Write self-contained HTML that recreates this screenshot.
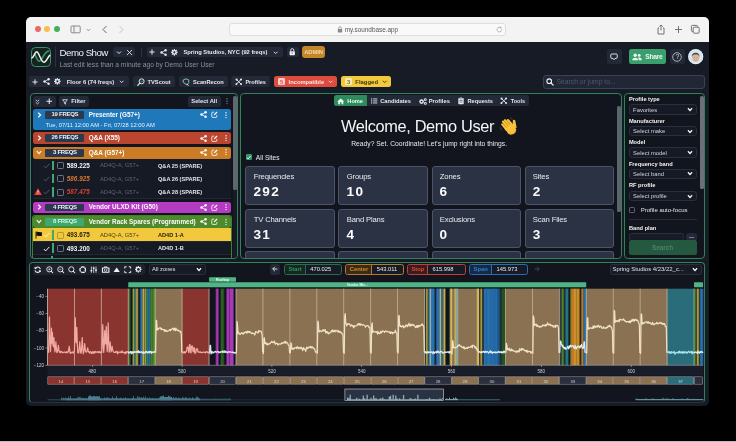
<!DOCTYPE html>
<html><head><meta charset="utf-8"><title>Soundbase</title>
<style>
html,body{margin:0;padding:0;background:#000;}
body{width:736px;height:442px;overflow:hidden;position:relative;font-family:"Liberation Sans", sans-serif;-webkit-font-smoothing:antialiased;}
svg{overflow:visible;display:block}
</style></head><body>
<div id="app" style="position:absolute;left:0;top:0;width:736px;height:442px;will-change:transform">
<div style="position:absolute;left:25.50px;top:17.00px;width:683.50px;height:389.30px;background:#161b26;border-radius:5px;overflow:hidden"></div>
<div style="position:absolute;left:25.50px;top:17.00px;width:683.50px;height:24.60px;background:#f3f3f3;border-radius:5px 5px 0 0"></div>
<div style="position:absolute;left:34.95px;top:26.45px;width:5.90px;height:5.90px;background:#ec6a5e;border-radius:50%"></div>
<div style="position:absolute;left:44.25px;top:26.45px;width:5.90px;height:5.90px;background:#f4bf4f;border-radius:50%"></div>
<div style="position:absolute;left:53.65px;top:26.45px;width:5.90px;height:5.90px;background:#42b354;border-radius:50%"></div>
<svg style="position:absolute;left:70px;top:25px" width="12" height="9" viewBox="0 0 12 9"><rect x="1" y="1" width="9.2" height="6.8" rx="0.9" fill="none" stroke="#7a7a7a" stroke-width="0.85"/><line x1="4" y1="1" x2="4" y2="7.8" stroke="#7a7a7a" stroke-width="0.85"/></svg>
<svg style="position:absolute;left:85.5px;top:27.5px" width="5" height="4" viewBox="0 0 5 4"><path d="M0.8 1 L2.5 2.8 L4.2 1" fill="none" stroke="#888" stroke-width="0.8"/></svg>
<svg style="position:absolute;left:101px;top:25px" width="8" height="9" viewBox="0 0 8 9"><path d="M5.5 1 L2 4.5 L5.5 8" fill="none" stroke="#666" stroke-width="1"/></svg>
<svg style="position:absolute;left:117px;top:25px" width="8" height="9" viewBox="0 0 8 9"><path d="M2.5 1 L6 4.5 L2.5 8" fill="none" stroke="#c4c4c4" stroke-width="1"/></svg>
<div style="position:absolute;left:229.00px;top:23.00px;width:276.50px;height:12.60px;background:#f9f9f9;border:0.6px solid #dedede;border-radius:3px;box-sizing:border-box"></div>
<svg style="position:absolute;left:336.5px;top:26px" width="6" height="7" viewBox="0 0 6 7"><rect x="0.8" y="3" width="4.4" height="3.4" rx="0.6" fill="#8a8a8a"/><path d="M1.7 3 V2 a1.3 1.3 0 0 1 2.6 0 V3" fill="none" stroke="#8a8a8a" stroke-width="0.7"/></svg>
<div style="position:absolute;left:344.80px;top:26.08px;line-height:7.63px;font-size:6.36px;color:#555;font-weight:400;white-space:nowrap;">my.soundbase.app</div>
<svg style="position:absolute;left:496px;top:26px" width="7" height="7" viewBox="0 0 7 7"><path d="M5.8 3.6 a2.4 2.4 0 1 1 -0.9 -1.9" fill="none" stroke="#999" stroke-width="0.7"/><path d="M4.3 0.7 L5.4 1.7 L4.2 2.4" fill="none" stroke="#999" stroke-width="0.7"/></svg>
<svg style="position:absolute;left:656px;top:23.5px" width="10" height="11" viewBox="0 0 10 11"><path d="M3 4 H2 V10 H8 V4 H7" fill="none" stroke="#666" stroke-width="0.9"/><path d="M5 6.5 V1 M3.3 2.6 L5 1 L6.7 2.6" fill="none" stroke="#666" stroke-width="0.9"/></svg>
<svg style="position:absolute;left:674px;top:25px" width="9" height="9" viewBox="0 0 9 9"><path d="M4.5 1 V8 M1 4.5 H8" fill="none" stroke="#666" stroke-width="0.9"/></svg>
<svg style="position:absolute;left:690px;top:24px" width="11" height="11" viewBox="0 0 11 11"><rect x="3.2" y="3.2" width="6" height="6" rx="1" fill="none" stroke="#666" stroke-width="0.9"/><path d="M7.5 3 V2.3 a0.9 0.9 0 0 0 -0.9 -0.9 H2.3 a0.9 0.9 0 0 0 -0.9 0.9 V6.6 a0.9 0.9 0 0 0 0.9 0.9 H3" fill="none" stroke="#666" stroke-width="0.9"/></svg>
<div style="position:absolute;left:31.30px;top:46.70px;width:19.80px;height:19.90px;background:#15241f;border:1.1px solid #3b9468;border-radius:4.5px;box-sizing:border-box"></div>
<svg style="position:absolute;left:31.3px;top:46.7px" width="19.8" height="19.8" viewBox="0 0 20 20"><path d="M4 7.6 C5.2 9.6 6.2 14.3 8.5 14.3 C11.3 14.3 13 4.6 17.8 4.2" fill="none" stroke="#379366" stroke-width="1.7" stroke-linecap="round"/><path d="M0.9 11 C2.9 10.4 3.8 4.9 5.8 4.9 S10.3 15.4 13 15.4 S16.8 10.2 18.9 8.4" fill="none" stroke="#f4f6f5" stroke-width="1.5" stroke-linecap="round"/></svg>
<div style="position:absolute;left:54.80px;top:46.50px;width:0.60px;height:20.00px;background:#2b3140"></div>
<div style="position:absolute;left:59.60px;top:46.57px;line-height:11.66px;font-size:9.72px;color:#eef0f4;font-weight:400;white-space:nowrap;letter-spacing:-0.518px;">Demo Show</div>
<div style="position:absolute;left:113.20px;top:47.00px;width:21.40px;height:10.20px;background:#232937;border-radius:2.5px"></div>
<svg style="position:absolute;left:115.6px;top:49.7px" width="6" height="5" viewBox="0 0 6 5"><path d="M1 1.5 L3 3.5 L5 1.5" fill="none" stroke="#e6e8ee" stroke-width="1"/></svg>
<svg style="position:absolute;left:126px;top:48.7px" width="7" height="7" viewBox="0 0 7 7"><path d="M1 1 L6 6 M6 1 L1 6" fill="none" stroke="#e6e8ee" stroke-width="0.85"/></svg>
<div style="position:absolute;left:140.80px;top:47.50px;width:0.60px;height:9.50px;background:#2b3140"></div>
<div style="position:absolute;left:147.00px;top:47.00px;width:135.80px;height:10.20px;background:#232937;border-radius:2.5px"></div>
<svg style="position:absolute;left:149.0px;top:49.1px" width="6" height="6" viewBox="0 0 6 6"><path d="M3 0.4 V5.6 M0.4 3 H5.6" fill="none" stroke="#e6e8ee" stroke-width="1"/></svg>
<svg style="position:absolute;left:159.9px;top:48.6px" width="7" height="7" viewBox="0 0 7 7"><path d="M5.5 1.3 L1.6 3.5 L5.5 5.7" fill="none" stroke="#e6e8ee" stroke-width="0.8"/><circle cx="5.6" cy="1.3" r="1.2" fill="#e6e8ee"/><circle cx="1.5" cy="3.5" r="1.2" fill="#e6e8ee"/><circle cx="5.6" cy="5.7" r="1.2" fill="#e6e8ee"/></svg>
<svg style="position:absolute;left:171.35px;top:48.75px" width="6.7" height="6.7" viewBox="0 0 7.4 7.4"><rect x="3.05" y="0" width="1.3" height="7.4" transform="rotate(0 3.7 3.7)" fill="#e6e8ee"/><rect x="3.05" y="0" width="1.3" height="7.4" transform="rotate(45 3.7 3.7)" fill="#e6e8ee"/><rect x="3.05" y="0" width="1.3" height="7.4" transform="rotate(90 3.7 3.7)" fill="#e6e8ee"/><rect x="3.05" y="0" width="1.3" height="7.4" transform="rotate(135 3.7 3.7)" fill="#e6e8ee"/><circle cx="3.7" cy="3.7" r="2.7" fill="#e6e8ee"/><circle cx="3.7" cy="3.7" r="1.15" fill="#232937"/></svg>
<div style="position:absolute;left:183.50px;top:49.13px;line-height:6.94px;font-size:5.78px;color:#e6e8ee;font-weight:700;white-space:nowrap;">Spring Studios, NYC (92 freqs)</div>
<svg style="position:absolute;left:272.8px;top:49.5px" width="5.4" height="5.4" viewBox="0 0 6 6"><path d="M1 2 L3 4 L5 2" fill="none" stroke="#eef0f4" stroke-width="1"/></svg>
<div style="position:absolute;left:286.50px;top:47.00px;width:12.10px;height:10.20px;background:#232937;border-radius:2.5px"></div>
<svg style="position:absolute;left:289.3px;top:48.3px" width="6.5" height="7.5" viewBox="0 0 6.5 7.5"><rect x="0.6" y="3.2" width="5.3" height="4" rx="0.6" fill="#f0f2f5"/><path d="M1.7 3.2 V2.2 a1.55 1.55 0 0 1 3.1 0 V3.2" fill="none" stroke="#f0f2f5" stroke-width="0.9"/><circle cx="3.25" cy="5" r="0.55" fill="#232937"/></svg>
<div style="position:absolute;left:302.00px;top:45.80px;width:23.20px;height:12.20px;background:#c5862a;border-radius:3px"></div>
<div style="position:absolute;left:313.50px;top:48.97px;line-height:6.86px;font-size:5.72px;color:#f3dcae;font-weight:700;white-space:nowrap;transform:translateX(-50%);">ADMIN</div>
<div style="position:absolute;left:59.50px;top:61.19px;line-height:8.03px;font-size:6.69px;color:#8a909d;font-weight:400;white-space:nowrap;">Last edit less than a minute ago by Demo User User</div>
<div style="position:absolute;left:607.00px;top:49.20px;width:14.50px;height:14.80px;background:#232937;border-radius:2.5px"></div>
<svg style="position:absolute;left:610.2px;top:53px" width="8" height="8" viewBox="0 0 8 8"><path d="M1.6 1 H6.4 a0.8 0.8 0 0 1 0.8 0.8 V4.6 a0.8 0.8 0 0 1 -0.8 0.8 H5 L4 6.8 L3 5.4 H1.6 a0.8 0.8 0 0 1 -0.8 -0.8 V1.8 a0.8 0.8 0 0 1 0.8 -0.8 Z" fill="none" stroke="#f0f2f5" stroke-width="0.9"/></svg>
<div style="position:absolute;left:629.00px;top:49.20px;width:37.20px;height:14.80px;background:#3a9f6c;border-radius:2.5px"></div>
<svg style="position:absolute;left:632px;top:53px" width="10" height="8" viewBox="0 0 10 8"><circle cx="3.2" cy="2.2" r="1.7" fill="#e9f7ef"/><path d="M0.3 7.3 a2.9 2.6 0 0 1 5.8 0 Z" fill="#e9f7ef"/><circle cx="7.2" cy="2.4" r="1.4" fill="#e9f7ef"/><path d="M6.4 4.6 a2.4 2.4 0 0 1 3.3 2.7 H6.9 a3.6 3.6 0 0 0 -1 -2.3 Z" fill="#e9f7ef"/></svg>
<div style="position:absolute;left:645.20px;top:53.02px;line-height:8.16px;font-size:6.8px;color:#e9f7ef;font-weight:700;white-space:nowrap;letter-spacing:-0.3px;">Share</div>
<div style="position:absolute;left:670.00px;top:49.20px;width:14.60px;height:14.80px;background:#232937;border-radius:2.5px"></div>
<svg style="position:absolute;left:672.3px;top:51.7px" width="10" height="10" viewBox="0 0 10 10"><circle cx="5" cy="5" r="4.3" fill="none" stroke="#d5d9e0" stroke-width="0.75"/></svg>
<div style="position:absolute;left:677.30px;top:52.92px;line-height:8.16px;font-size:6.8px;color:#d5d9e0;font-weight:400;white-space:nowrap;transform:translateX(-50%);">?</div>
<svg style="position:absolute;left:688.2px;top:49px" width="15.4" height="15.4" viewBox="0 0 15.4 15.4"><defs><clipPath id="av"><circle cx="7.7" cy="7.7" r="7.1"/></clipPath></defs><circle cx="7.7" cy="7.7" r="7.6" fill="#e8f2f8"/><circle cx="7.7" cy="7.7" r="6.9" fill="#d3e7f3"/><g clip-path="url(#av)"><path d="M4.9 12.6 Q7.7 11 10.5 12.6 V15.4 H4.9 Z" fill="#dfe8ee"/><ellipse cx="7.7" cy="8.6" rx="3.6" ry="4.3" fill="#dcb79c"/><path d="M3.9 8 C3.2 2.4 12.2 2.4 11.5 8 C11 5.9 10 5.4 7.7 5.4 S4.4 5.9 3.9 8 Z" fill="#5b4232"/><path d="M6.4 11 Q7.7 11.8 9 11" stroke="#b98a72" stroke-width="0.5" fill="none"/><circle cx="6.3" cy="8.4" r="0.4" fill="#5a4a40"/><circle cx="9.1" cy="8.4" r="0.4" fill="#5a4a40"/></g></svg>
<div style="position:absolute;left:28.60px;top:76.40px;width:100.40px;height:10.80px;background:#232937;border-radius:2.5px"></div>
<svg style="position:absolute;left:31.700000000000003px;top:78.8px" width="6" height="6" viewBox="0 0 6 6"><path d="M3 0.4 V5.6 M0.4 3 H5.6" fill="none" stroke="#e6e8ee" stroke-width="1"/></svg>
<svg style="position:absolute;left:42.6px;top:78.3px" width="7" height="7" viewBox="0 0 7 7"><path d="M5.5 1.3 L1.6 3.5 L5.5 5.7" fill="none" stroke="#e6e8ee" stroke-width="0.8"/><circle cx="5.6" cy="1.3" r="1.2" fill="#e6e8ee"/><circle cx="1.5" cy="3.5" r="1.2" fill="#e6e8ee"/><circle cx="5.6" cy="5.7" r="1.2" fill="#e6e8ee"/></svg>
<svg style="position:absolute;left:54.05px;top:78.45px" width="6.7" height="6.7" viewBox="0 0 7.4 7.4"><rect x="3.05" y="0" width="1.3" height="7.4" transform="rotate(0 3.7 3.7)" fill="#e6e8ee"/><rect x="3.05" y="0" width="1.3" height="7.4" transform="rotate(45 3.7 3.7)" fill="#e6e8ee"/><rect x="3.05" y="0" width="1.3" height="7.4" transform="rotate(90 3.7 3.7)" fill="#e6e8ee"/><rect x="3.05" y="0" width="1.3" height="7.4" transform="rotate(135 3.7 3.7)" fill="#e6e8ee"/><circle cx="3.7" cy="3.7" r="2.7" fill="#e6e8ee"/><circle cx="3.7" cy="3.7" r="1.15" fill="#232937"/></svg>
<div style="position:absolute;left:66.70px;top:78.69px;line-height:7.02px;font-size:5.85px;color:#e6e8ee;font-weight:700;white-space:nowrap;">Floor 6 (74 freqs)</div>
<svg style="position:absolute;left:118.8px;top:79.1px" width="5.4" height="5.4" viewBox="0 0 6 6"><path d="M1 2 L3 4 L5 2" fill="none" stroke="#eef0f4" stroke-width="1"/></svg>
<div style="position:absolute;left:133.30px;top:76.40px;width:41.30px;height:10.80px;background:#232937;border-radius:2.5px"></div>
<svg style="position:absolute;left:136.5px;top:77.8px" width="8" height="8" viewBox="0 0 8 8"><circle cx="4.6" cy="3.3" r="2.5" fill="none" stroke="#e6e8ee" stroke-width="1"/><path d="M2.8 5.2 L0.8 7.3" stroke="#e6e8ee" stroke-width="1.2" stroke-linecap="round"/><path d="M3.3 3.3 H5.9" stroke="#3ea273" stroke-width="0.9"/></svg>
<div style="position:absolute;left:147.60px;top:78.78px;line-height:6.84px;font-size:5.7px;color:#e6e8ee;font-weight:700;white-space:nowrap;">TVScout</div>
<div style="position:absolute;left:178.60px;top:76.40px;width:49.00px;height:10.80px;background:#232937;border-radius:2.5px"></div>
<svg style="position:absolute;left:182px;top:77.6px" width="8" height="8.5" viewBox="0 0 8 8.5"><path d="M4 0.8 L6.8 2 V4.4 L5 7 L3 5.6 L1.2 4.2 V2 Z" fill="none" stroke="#8fd0c0" stroke-width="0.9"/><path d="M4.8 5.8 L6.6 7.8" stroke="#e6e8ee" stroke-width="0.9"/></svg>
<div style="position:absolute;left:193.00px;top:78.82px;line-height:6.77px;font-size:5.64px;color:#e6e8ee;font-weight:700;white-space:nowrap;">ScanRecon</div>
<div style="position:absolute;left:231.40px;top:76.40px;width:38.20px;height:10.80px;background:#232937;border-radius:2.5px"></div>
<svg style="position:absolute;left:234.95px;top:78.05px" width="7.5" height="7.5" viewBox="0 0 8 8"><path d="M1.3 1.3 L6.7 6.7" stroke="#e6e8ee" stroke-width="1.05" stroke-linecap="round"/><path d="M6.7 1.3 L1.3 6.7" stroke="#e6e8ee" stroke-width="1.05" stroke-linecap="round"/><circle cx="1.7" cy="1.7" r="1.15" fill="#e6e8ee"/><circle cx="6.4" cy="1.6" r="1.15" fill="#e6e8ee"/><circle cx="1.6" cy="6.4" r="1" fill="#e6e8ee"/><circle cx="6.4" cy="6.4" r="1" fill="#e6e8ee"/></svg>
<div style="position:absolute;left:245.40px;top:78.84px;line-height:6.72px;font-size:5.6px;color:#e6e8ee;font-weight:700;white-space:nowrap;">Profiles</div>
<div style="position:absolute;left:274.00px;top:76.20px;width:63.20px;height:11.30px;background:#df4b3f;border-radius:2.5px"></div>
<div style="position:absolute;left:278.20px;top:78.40px;width:6.80px;height:7.00px;background:#f4d0cc;border-radius:1.3px"></div>
<div style="position:absolute;left:281.60px;top:78.82px;line-height:6.96px;font-size:5.8px;color:#df4b3f;font-weight:700;white-space:nowrap;transform:translateX(-50%);">5</div>
<div style="position:absolute;left:288.60px;top:78.74px;line-height:6.92px;font-size:5.77px;color:#fbe6e3;font-weight:700;white-space:nowrap;">Incompatible</div>
<svg style="position:absolute;left:327.6px;top:79.1px" width="5.4" height="5.4" viewBox="0 0 6 6"><path d="M1 2 L3 4 L5 2" fill="none" stroke="#fbe6e3" stroke-width="1"/></svg>
<div style="position:absolute;left:341.00px;top:76.20px;width:50.20px;height:11.30px;background:#f2c83c;border-radius:2.5px"></div>
<div style="position:absolute;left:345.20px;top:78.40px;width:6.80px;height:7.00px;background:#fbeab0;border-radius:1.3px"></div>
<div style="position:absolute;left:348.60px;top:78.82px;line-height:6.96px;font-size:5.8px;color:#8c6d10;font-weight:700;white-space:nowrap;transform:translateX(-50%);">3</div>
<div style="position:absolute;left:355.30px;top:78.64px;line-height:7.12px;font-size:5.93px;color:#3b3210;font-weight:700;white-space:nowrap;">Flagged</div>
<svg style="position:absolute;left:381.90000000000003px;top:79.1px" width="5.4" height="5.4" viewBox="0 0 6 6"><path d="M1 2 L3 4 L5 2" fill="none" stroke="#3b3210" stroke-width="1"/></svg>
<div style="position:absolute;left:542.50px;top:74.60px;width:162.10px;height:14.20px;background:#212735;border:0.8px solid #3a4254;border-radius:3px;box-sizing:border-box"></div>
<svg style="position:absolute;left:545.6px;top:78px" width="8" height="8" viewBox="0 0 8 8"><circle cx="3.2" cy="3.2" r="2.3" fill="none" stroke="#f0f2f5" stroke-width="1.1"/><path d="M5 5 L7.2 7.2" stroke="#f0f2f5" stroke-width="1.2" stroke-linecap="round"/></svg>
<div style="position:absolute;left:556.50px;top:78.13px;line-height:8.15px;font-size:6.79px;color:#4f586a;font-weight:400;white-space:nowrap;">Search or jump to...</div>
<div style="position:absolute;left:30.00px;top:93.30px;width:208.20px;height:166.00px;background:#12151d;border:1px solid #2f8259;border-radius:4px;box-sizing:border-box"></div>
<div style="position:absolute;left:32.60px;top:96.30px;width:23.70px;height:10.30px;background:#232937;border-radius:2.5px"></div>
<svg style="position:absolute;left:35.2px;top:98.6px" width="5" height="6" viewBox="0 0 5 6"><path d="M0.8 0.8 L2.5 2.4 L4.2 0.8 M0.8 3.3 L2.5 4.9 L4.2 3.3" fill="none" stroke="#e6e8ee" stroke-width="0.8"/></svg>
<svg style="position:absolute;left:45.55px;top:98.25px" width="6.5" height="6.5" viewBox="0 0 6 6"><path d="M3 0.4 V5.6 M0.4 3 H5.6" fill="none" stroke="#e6e8ee" stroke-width="1"/></svg>
<div style="position:absolute;left:58.70px;top:96.30px;width:30.00px;height:10.30px;background:#232937;border-radius:2.5px"></div>
<svg style="position:absolute;left:62.3px;top:98.6px" width="6" height="6" viewBox="0 0 6 6"><path d="M0.6 0.7 H5.4 L3.6 3 V5.2 L2.4 4.6 V3 Z" fill="none" stroke="#e6e8ee" stroke-width="0.8" stroke-linejoin="round"/></svg>
<div style="position:absolute;left:71.30px;top:98.42px;line-height:6.96px;font-size:5.8px;color:#e6e8ee;font-weight:700;white-space:nowrap;">Filter</div>
<div style="position:absolute;left:187.50px;top:96.30px;width:33.00px;height:10.30px;background:#232937;border-radius:2.5px"></div>
<div style="position:absolute;left:191.30px;top:98.44px;line-height:6.92px;font-size:5.77px;color:#e6e8ee;font-weight:700;white-space:nowrap;">Select All</div>
<svg style="position:absolute;left:225.5px;top:98.3px" width="2" height="6.4" viewBox="0 0 2 6.4"><circle cx="1" cy="0.8" r="0.7" fill="#7a8291"/><circle cx="1" cy="3.2" r="0.7" fill="#7a8291"/><circle cx="1" cy="5.6" r="0.7" fill="#7a8291"/></svg>
<div style="position:absolute;left:233.20px;top:95.50px;width:3.80px;height:94.50px;background:#62676f;border-radius:1.5px"></div>
<div style="position:absolute;left:233.20px;top:190.00px;width:3.80px;height:67.00px;background:#171b23"></div>
<div style="position:absolute;left:33.00px;top:109.30px;width:198.00px;height:20.50px;background:#1f78ba;border-radius:2.5px"></div>
<svg style="position:absolute;left:37px;top:111.7px" width="5" height="6" viewBox="0 0 5 6"><path d="M1.2 0.8 L3.6 3 L1.2 5.2" fill="none" stroke="#fafafa" stroke-width="1.2"/></svg>
<div style="position:absolute;left:45.30px;top:110.80px;width:39.20px;height:7.80px;background:#2b394f;border-radius:1px"></div>
<div style="position:absolute;left:64.90px;top:111.00px;line-height:7.20px;font-size:6.0px;color:#eef0f4;font-weight:700;white-space:nowrap;transform:translateX(-50%);letter-spacing:-0.28px;">19 FREQS</div>
<div style="position:absolute;left:88.70px;top:110.67px;line-height:7.66px;font-size:6.38px;color:#fbfbfb;font-weight:700;white-space:nowrap;">Presenter (G57+)</div>
<svg style="position:absolute;left:199.5px;top:111.2px" width="7" height="7" viewBox="0 0 7 7"><path d="M5.5 1.3 L1.6 3.5 L5.5 5.7" fill="none" stroke="#fff" stroke-width="0.8"/><circle cx="5.6" cy="1.3" r="1.2" fill="#fff"/><circle cx="1.5" cy="3.5" r="1.2" fill="#fff"/><circle cx="5.6" cy="5.7" r="1.2" fill="#fff"/></svg>
<svg style="position:absolute;left:210.8px;top:111.2px" width="7" height="7" viewBox="0 0 7 7"><path d="M3.2 1.2 H1.6 a0.8 0.8 0 0 0 -0.8 0.8 V5.6 a0.8 0.8 0 0 0 0.8 0.8 H5 a0.8 0.8 0 0 0 0.8 -0.8 V4" fill="none" stroke="#fff" stroke-width="0.8"/><path d="M2.8 4.3 L3 3.2 L5.6 0.6 L6.5 1.5 L3.9 4.1 Z" fill="#fff"/></svg>
<svg style="position:absolute;left:224.5px;top:111.5px" width="2" height="6.4" viewBox="0 0 2 6.4"><circle cx="1" cy="0.8" r="0.7" fill="#fff"/><circle cx="1" cy="3.2" r="0.7" fill="#fff"/><circle cx="1" cy="5.6" r="0.7" fill="#fff"/></svg>
<div style="position:absolute;left:45.80px;top:121.61px;line-height:6.97px;font-size:5.81px;color:#e5f0fa;font-weight:400;white-space:nowrap;">Tue, 07/11 12:00 AM - Fri, 07/28 12:00 AM</div>
<div style="position:absolute;left:33.00px;top:132.30px;width:198.00px;height:11.70px;background:#bb4630;border-radius:2.5px"></div>
<svg style="position:absolute;left:37px;top:135.15px" width="5" height="6" viewBox="0 0 5 6"><path d="M1.2 0.8 L3.6 3 L1.2 5.2" fill="none" stroke="#fafafa" stroke-width="1.2"/></svg>
<div style="position:absolute;left:45.30px;top:134.25px;width:39.20px;height:7.80px;background:#2b394f;border-radius:1px"></div>
<div style="position:absolute;left:64.90px;top:134.45px;line-height:7.20px;font-size:6.0px;color:#eef0f4;font-weight:700;white-space:nowrap;transform:translateX(-50%);letter-spacing:-0.28px;">26 FREQS</div>
<div style="position:absolute;left:88.70px;top:134.12px;line-height:7.66px;font-size:6.38px;color:#fbfbfb;font-weight:700;white-space:nowrap;">Q&amp;A (X55)</div>
<svg style="position:absolute;left:199.5px;top:134.65px" width="7" height="7" viewBox="0 0 7 7"><path d="M5.5 1.3 L1.6 3.5 L5.5 5.7" fill="none" stroke="#fff" stroke-width="0.8"/><circle cx="5.6" cy="1.3" r="1.2" fill="#fff"/><circle cx="1.5" cy="3.5" r="1.2" fill="#fff"/><circle cx="5.6" cy="5.7" r="1.2" fill="#fff"/></svg>
<svg style="position:absolute;left:210.8px;top:134.65px" width="7" height="7" viewBox="0 0 7 7"><path d="M3.2 1.2 H1.6 a0.8 0.8 0 0 0 -0.8 0.8 V5.6 a0.8 0.8 0 0 0 0.8 0.8 H5 a0.8 0.8 0 0 0 0.8 -0.8 V4" fill="none" stroke="#fff" stroke-width="0.8"/><path d="M2.8 4.3 L3 3.2 L5.6 0.6 L6.5 1.5 L3.9 4.1 Z" fill="#fff"/></svg>
<svg style="position:absolute;left:224.5px;top:134.95000000000002px" width="2" height="6.4" viewBox="0 0 2 6.4"><circle cx="1" cy="0.8" r="0.7" fill="#fff"/><circle cx="1" cy="3.2" r="0.7" fill="#fff"/><circle cx="1" cy="5.6" r="0.7" fill="#fff"/></svg>
<div style="position:absolute;left:33.00px;top:146.50px;width:198.00px;height:12.30px;background:#cb7c24;border-radius:2.5px"></div>
<svg style="position:absolute;left:36.3px;top:150.15px" width="6" height="5" viewBox="0 0 6 5"><path d="M0.8 1.2 L3 3.6 L5.2 1.2" fill="none" stroke="#fafafa" stroke-width="1.2"/></svg>
<div style="position:absolute;left:45.30px;top:148.75px;width:39.20px;height:7.80px;background:#2b394f;border-radius:1px"></div>
<div style="position:absolute;left:64.90px;top:148.95px;line-height:7.20px;font-size:6.0px;color:#eef0f4;font-weight:700;white-space:nowrap;transform:translateX(-50%);letter-spacing:-0.28px;">3 FREQS</div>
<div style="position:absolute;left:88.70px;top:148.62px;line-height:7.66px;font-size:6.38px;color:#fbfbfb;font-weight:700;white-space:nowrap;">Q&amp;A (G57+)</div>
<svg style="position:absolute;left:199.5px;top:149.15px" width="7" height="7" viewBox="0 0 7 7"><path d="M5.5 1.3 L1.6 3.5 L5.5 5.7" fill="none" stroke="#fff" stroke-width="0.8"/><circle cx="5.6" cy="1.3" r="1.2" fill="#fff"/><circle cx="1.5" cy="3.5" r="1.2" fill="#fff"/><circle cx="5.6" cy="5.7" r="1.2" fill="#fff"/></svg>
<svg style="position:absolute;left:210.8px;top:149.15px" width="7" height="7" viewBox="0 0 7 7"><path d="M3.2 1.2 H1.6 a0.8 0.8 0 0 0 -0.8 0.8 V5.6 a0.8 0.8 0 0 0 0.8 0.8 H5 a0.8 0.8 0 0 0 0.8 -0.8 V4" fill="none" stroke="#fff" stroke-width="0.8"/><path d="M2.8 4.3 L3 3.2 L5.6 0.6 L6.5 1.5 L3.9 4.1 Z" fill="#fff"/></svg>
<svg style="position:absolute;left:224.5px;top:149.45000000000002px" width="2" height="6.4" viewBox="0 0 2 6.4"><circle cx="1" cy="0.8" r="0.7" fill="#fff"/><circle cx="1" cy="3.2" r="0.7" fill="#fff"/><circle cx="1" cy="5.6" r="0.7" fill="#fff"/></svg>
<div style="position:absolute;left:33.00px;top:159.00px;width:198.00px;height:12.80px;background:#161a24"></div>
<svg style="position:absolute;left:42.6px;top:163.0px" width="7" height="6" viewBox="0 0 7 6"><path d="M0.8 3 L2.7 4.9 L6.3 0.9" fill="none" stroke="#4d5564" stroke-width="1"/></svg>
<div style="position:absolute;left:51.80px;top:160.50px;width:1.80px;height:9.80px;background:#3ea86e"></div>
<div style="position:absolute;left:57.20px;top:162.10px;width:7.10px;height:7.10px;border:0.9px solid #6b7280;border-radius:1.2px;box-sizing:border-box"></div>
<div style="position:absolute;left:66.80px;top:162.09px;line-height:7.62px;font-size:6.35px;color:#f2f3f5;font-weight:700;white-space:nowrap;">589.225</div>
<div style="position:absolute;left:100.00px;top:162.41px;line-height:6.97px;font-size:5.81px;color:#5d6574;font-weight:400;white-space:nowrap;">AD4Q-A, G57+</div>
<div style="position:absolute;left:158.00px;top:162.54px;line-height:6.72px;font-size:5.6px;color:#e1e4ea;font-weight:700;white-space:nowrap;">Q&amp;A 25 (SPARE)</div>
<div style="position:absolute;left:33.00px;top:171.80px;width:198.00px;height:0.50px;background:#232835"></div>
<div style="position:absolute;left:33.00px;top:172.10px;width:198.00px;height:12.80px;background:#161a24"></div>
<svg style="position:absolute;left:42.6px;top:176.1px" width="7" height="6" viewBox="0 0 7 6"><path d="M0.8 3 L2.7 4.9 L6.3 0.9" fill="none" stroke="#4d5564" stroke-width="1"/></svg>
<div style="position:absolute;left:51.80px;top:173.60px;width:1.80px;height:9.80px;background:#3ea86e"></div>
<div style="position:absolute;left:57.20px;top:175.20px;width:7.10px;height:7.10px;border:0.9px solid #6b7280;border-radius:1.2px;box-sizing:border-box"></div>
<div style="position:absolute;left:66.80px;top:175.19px;line-height:7.62px;font-size:6.35px;color:#d8792f;font-weight:700;white-space:nowrap;font-style:italic;">586.925</div>
<div style="position:absolute;left:100.00px;top:175.51px;line-height:6.97px;font-size:5.81px;color:#5d6574;font-weight:400;white-space:nowrap;">AD4Q-A, G57+</div>
<div style="position:absolute;left:158.00px;top:175.64px;line-height:6.72px;font-size:5.6px;color:#e1e4ea;font-weight:700;white-space:nowrap;">Q&amp;A 26 (SPARE)</div>
<div style="position:absolute;left:33.00px;top:184.90px;width:198.00px;height:0.50px;background:#232835"></div>
<div style="position:absolute;left:33.00px;top:185.40px;width:198.00px;height:12.80px;background:#161a24"></div>
<svg style="position:absolute;left:34px;top:188.20000000000002px" width="8" height="7.2" viewBox="0 0 8 7.2"><path d="M4 0.3 L7.8 6.9 H0.2 Z" fill="#e5452f"/><path d="M4 2.4 V4.6" stroke="#fff" stroke-width="0.8"/><circle cx="4" cy="5.7" r="0.45" fill="#fff"/></svg>
<svg style="position:absolute;left:42.6px;top:189.4px" width="7" height="6" viewBox="0 0 7 6"><path d="M0.8 3 L2.7 4.9 L6.3 0.9" fill="none" stroke="#4d5564" stroke-width="1"/></svg>
<div style="position:absolute;left:51.80px;top:186.90px;width:1.80px;height:9.80px;background:#3ea86e"></div>
<div style="position:absolute;left:57.20px;top:188.50px;width:7.10px;height:7.10px;border:0.9px solid #6b7280;border-radius:1.2px;box-sizing:border-box"></div>
<div style="position:absolute;left:66.80px;top:188.49px;line-height:7.62px;font-size:6.35px;color:#d8402f;font-weight:700;white-space:nowrap;font-style:italic;">587.475</div>
<div style="position:absolute;left:100.00px;top:188.81px;line-height:6.97px;font-size:5.81px;color:#5d6574;font-weight:400;white-space:nowrap;">AD4Q-A, G57+</div>
<div style="position:absolute;left:158.00px;top:188.94px;line-height:6.72px;font-size:5.6px;color:#e1e4ea;font-weight:700;white-space:nowrap;">Q&amp;A 28 (SPARE)</div>
<div style="position:absolute;left:33.00px;top:198.20px;width:198.00px;height:0.50px;background:#232835"></div>
<div style="position:absolute;left:33.00px;top:201.50px;width:198.00px;height:11.90px;background:#b43cc3;border-radius:2.5px"></div>
<svg style="position:absolute;left:37px;top:204.45px" width="5" height="6" viewBox="0 0 5 6"><path d="M1.2 0.8 L3.6 3 L1.2 5.2" fill="none" stroke="#fafafa" stroke-width="1.2"/></svg>
<div style="position:absolute;left:45.30px;top:203.55px;width:39.20px;height:7.80px;background:#2b394f;border-radius:1px"></div>
<div style="position:absolute;left:64.90px;top:203.75px;line-height:7.20px;font-size:6.0px;color:#eef0f4;font-weight:700;white-space:nowrap;transform:translateX(-50%);letter-spacing:-0.28px;">4 FREQS</div>
<div style="position:absolute;left:88.70px;top:203.42px;line-height:7.66px;font-size:6.38px;color:#fbfbfb;font-weight:700;white-space:nowrap;">Vendor ULXD Kit (G50)</div>
<svg style="position:absolute;left:199.5px;top:203.95px" width="7" height="7" viewBox="0 0 7 7"><path d="M5.5 1.3 L1.6 3.5 L5.5 5.7" fill="none" stroke="#fff" stroke-width="0.8"/><circle cx="5.6" cy="1.3" r="1.2" fill="#fff"/><circle cx="1.5" cy="3.5" r="1.2" fill="#fff"/><circle cx="5.6" cy="5.7" r="1.2" fill="#fff"/></svg>
<svg style="position:absolute;left:210.8px;top:203.95px" width="7" height="7" viewBox="0 0 7 7"><path d="M3.2 1.2 H1.6 a0.8 0.8 0 0 0 -0.8 0.8 V5.6 a0.8 0.8 0 0 0 0.8 0.8 H5 a0.8 0.8 0 0 0 0.8 -0.8 V4" fill="none" stroke="#fff" stroke-width="0.8"/><path d="M2.8 4.3 L3 3.2 L5.6 0.6 L6.5 1.5 L3.9 4.1 Z" fill="#fff"/></svg>
<svg style="position:absolute;left:224.5px;top:204.25px" width="2" height="6.4" viewBox="0 0 2 6.4"><circle cx="1" cy="0.8" r="0.7" fill="#fff"/><circle cx="1" cy="3.2" r="0.7" fill="#fff"/><circle cx="1" cy="5.6" r="0.7" fill="#fff"/></svg>
<div style="position:absolute;left:32.30px;top:215.00px;width:199.30px;height:43.00px;border:1px solid #44802c;border-radius:3px 3px 0 0;box-sizing:border-box;border-bottom:none"></div>
<div style="position:absolute;left:33.00px;top:215.60px;width:198.00px;height:12.60px;background:#4e8a2b;border-radius:2.5px"></div>
<svg style="position:absolute;left:36.3px;top:219.39999999999998px" width="6" height="5" viewBox="0 0 6 5"><path d="M0.8 1.2 L3 3.6 L5.2 1.2" fill="none" stroke="#fafafa" stroke-width="1.2"/></svg>
<div style="position:absolute;left:45.30px;top:218.00px;width:39.20px;height:7.80px;background:#3ea86e;border-radius:1px"></div>
<div style="position:absolute;left:64.90px;top:218.20px;line-height:7.20px;font-size:6.0px;color:#d8f3e3;font-weight:700;white-space:nowrap;transform:translateX(-50%);letter-spacing:-0.28px;">8 FREQS</div>
<div style="position:absolute;left:88.70px;top:217.87px;line-height:7.66px;font-size:6.38px;color:#fbfbfb;font-weight:700;white-space:nowrap;">Vendor Rack Spares (Programmed)</div>
<svg style="position:absolute;left:199.5px;top:218.39999999999998px" width="7" height="7" viewBox="0 0 7 7"><path d="M5.5 1.3 L1.6 3.5 L5.5 5.7" fill="none" stroke="#fff" stroke-width="0.8"/><circle cx="5.6" cy="1.3" r="1.2" fill="#fff"/><circle cx="1.5" cy="3.5" r="1.2" fill="#fff"/><circle cx="5.6" cy="5.7" r="1.2" fill="#fff"/></svg>
<svg style="position:absolute;left:210.8px;top:218.39999999999998px" width="7" height="7" viewBox="0 0 7 7"><path d="M3.2 1.2 H1.6 a0.8 0.8 0 0 0 -0.8 0.8 V5.6 a0.8 0.8 0 0 0 0.8 0.8 H5 a0.8 0.8 0 0 0 0.8 -0.8 V4" fill="none" stroke="#fff" stroke-width="0.8"/><path d="M2.8 4.3 L3 3.2 L5.6 0.6 L6.5 1.5 L3.9 4.1 Z" fill="#fff"/></svg>
<svg style="position:absolute;left:224.5px;top:218.7px" width="2" height="6.4" viewBox="0 0 2 6.4"><circle cx="1" cy="0.8" r="0.7" fill="#fff"/><circle cx="1" cy="3.2" r="0.7" fill="#fff"/><circle cx="1" cy="5.6" r="0.7" fill="#fff"/></svg>
<div style="position:absolute;left:33.00px;top:228.40px;width:198.00px;height:12.80px;background:#f2c83c"></div>
<svg style="position:absolute;left:34.6px;top:230.8px" width="8" height="8" viewBox="0 0 8 8"><path d="M1 0.5 V7.6" stroke="#111" stroke-width="0.9"/><path d="M1.3 1 C3 0.2 4.6 1.9 6.9 1 V4.8 C4.8 5.7 3 4 1.3 4.9 Z" fill="#111"/></svg>
<svg style="position:absolute;left:42.6px;top:232.4px" width="7" height="6" viewBox="0 0 7 6"><path d="M0.8 3 L2.7 4.9 L6.3 0.9" fill="none" stroke="#fff7d0" stroke-width="1"/></svg>
<div style="position:absolute;left:51.80px;top:229.90px;width:1.80px;height:9.80px;background:#3ea86e"></div>
<div style="position:absolute;left:57.20px;top:231.50px;width:7.10px;height:7.10px;border:0.9px solid #b8922a;border-radius:1.2px;box-sizing:border-box"></div>
<div style="position:absolute;left:66.80px;top:231.49px;line-height:7.62px;font-size:6.35px;color:#2a2410;font-weight:700;white-space:nowrap;">493.675</div>
<div style="position:absolute;left:100.00px;top:231.81px;line-height:6.97px;font-size:5.81px;color:#4a4018;font-weight:400;white-space:nowrap;">AD4Q-A, G57+</div>
<div style="position:absolute;left:158.00px;top:231.94px;line-height:6.72px;font-size:5.6px;color:#2a2410;font-weight:700;white-space:nowrap;">AD4D 1-A</div>
<div style="position:absolute;left:33.00px;top:241.20px;width:198.00px;height:0.50px;background:#232835"></div>
<div style="position:absolute;left:33.00px;top:241.60px;width:198.00px;height:12.80px;background:#161a24"></div>
<svg style="position:absolute;left:42.6px;top:245.6px" width="7" height="6" viewBox="0 0 7 6"><path d="M0.8 3 L2.7 4.9 L6.3 0.9" fill="none" stroke="#f2f3f5" stroke-width="1"/></svg>
<div style="position:absolute;left:51.80px;top:243.10px;width:1.80px;height:9.80px;background:#3ea86e"></div>
<div style="position:absolute;left:57.20px;top:244.70px;width:7.10px;height:7.10px;border:0.9px solid #6b7280;border-radius:1.2px;box-sizing:border-box"></div>
<div style="position:absolute;left:66.80px;top:244.69px;line-height:7.62px;font-size:6.35px;color:#f2f3f5;font-weight:700;white-space:nowrap;">493.200</div>
<div style="position:absolute;left:100.00px;top:245.01px;line-height:6.97px;font-size:5.81px;color:#5d6574;font-weight:400;white-space:nowrap;">AD4Q-A, G57+</div>
<div style="position:absolute;left:158.00px;top:245.14px;line-height:6.72px;font-size:5.6px;color:#e1e4ea;font-weight:700;white-space:nowrap;">AD4D 1-B</div>
<div style="position:absolute;left:33.00px;top:254.40px;width:198.00px;height:0.50px;background:#232835"></div>
<div style="position:absolute;left:51.30px;top:256.30px;width:1.70px;height:1.50px;background:#3ea86e"></div>
<div style="position:absolute;left:240.20px;top:93.30px;width:381.80px;height:166.00px;background:#12151d;border:1px solid #2f8259;border-radius:4px;box-sizing:border-box"></div>
<div style="position:absolute;left:333.50px;top:95.20px;width:195.50px;height:11.20px;background:#232937;border-radius:2.5px"></div>
<div style="position:absolute;left:333.50px;top:95.20px;width:33.70px;height:11.20px;background:#2f8a5c;border-radius:2.5px 0 0 2.5px"></div>
<svg style="position:absolute;left:337px;top:97.6px" width="7.5" height="6.5" viewBox="0 0 7.5 6.5"><path d="M3.75 0.4 L7.3 3.4 H6.3 V6.2 H4.5 V4.2 H3 V6.2 H1.2 V3.4 H0.2 Z" fill="#eafaf1"/></svg>
<div style="position:absolute;left:347.30px;top:97.90px;line-height:6.80px;font-size:5.67px;color:#eafaf1;font-weight:700;white-space:nowrap;">Home</div>
<svg style="position:absolute;left:371px;top:98px" width="6.5" height="6" viewBox="0 0 6.5 6"><g fill="#e6e8ee"><rect x="0" y="0.4" width="1.2" height="1.1"/><rect x="0" y="2.4" width="1.2" height="1.1"/><rect x="0" y="4.4" width="1.2" height="1.1"/><rect x="2.1" y="0.5" width="4.2" height="0.9"/><rect x="2.1" y="2.5" width="4.2" height="0.9"/><rect x="2.1" y="4.5" width="4.2" height="0.9"/></g></svg>
<div style="position:absolute;left:380.20px;top:97.88px;line-height:6.84px;font-size:5.7px;color:#e6e8ee;font-weight:700;white-space:nowrap;">Candidates</div>
<svg style="position:absolute;left:418.6px;top:97.6px" width="8" height="7" viewBox="0 0 8 7"><g fill="#e6e8ee"><circle cx="2.6" cy="3.6" r="2.3"/><circle cx="6.3" cy="1.7" r="1.4"/><circle cx="6.3" cy="5.4" r="1.4"/></g><circle cx="2.6" cy="3.6" r="0.9" fill="#232937"/><circle cx="6.3" cy="1.7" r="0.5" fill="#232937"/><circle cx="6.3" cy="5.4" r="0.5" fill="#232937"/></svg>
<div style="position:absolute;left:428.70px;top:97.83px;line-height:6.95px;font-size:5.79px;color:#e6e8ee;font-weight:700;white-space:nowrap;">Profiles</div>
<svg style="position:absolute;left:457.6px;top:97.2px" width="6" height="7.4" viewBox="0 0 6 7.4"><rect x="0.3" y="1" width="5.4" height="6.2" rx="0.7" fill="#e6e8ee"/><rect x="1.8" y="0.2" width="2.4" height="1.8" rx="0.5" fill="#e6e8ee" stroke="#232937" stroke-width="0.4"/><path d="M1.4 3.5 H4.6 M1.4 5 H4.6" stroke="#232937" stroke-width="0.5"/></svg>
<div style="position:absolute;left:467.50px;top:97.90px;line-height:6.79px;font-size:5.66px;color:#e6e8ee;font-weight:700;white-space:nowrap;">Requests</div>
<svg style="position:absolute;left:500.05px;top:97.15px" width="7.5" height="7.5" viewBox="0 0 8 8"><path d="M1.3 1.3 L6.7 6.7" stroke="#e6e8ee" stroke-width="1.05" stroke-linecap="round"/><path d="M6.7 1.3 L1.3 6.7" stroke="#e6e8ee" stroke-width="1.05" stroke-linecap="round"/><circle cx="1.7" cy="1.7" r="1.15" fill="#e6e8ee"/><circle cx="6.4" cy="1.6" r="1.15" fill="#e6e8ee"/><circle cx="1.6" cy="6.4" r="1" fill="#e6e8ee"/><circle cx="6.4" cy="6.4" r="1" fill="#e6e8ee"/></svg>
<div style="position:absolute;left:510.80px;top:98.00px;line-height:6.60px;font-size:5.5px;color:#e6e8ee;font-weight:700;white-space:nowrap;">Tools</div>
<div style="position:absolute;left:617.20px;top:106.00px;width:3.40px;height:105.60px;background:#5d6470;border-radius:1.6px"></div>
<div style="position:absolute;left:341.00px;top:116.79px;line-height:19.62px;font-size:16.35px;color:#f4f5f7;font-weight:400;white-space:nowrap;letter-spacing:-0.359px;">Welcome, Demo User <span style="position:absolute;left:166px;top:8px;font-size:4px;line-height:5px;letter-spacing:0;color:#f9c23c">👋</span></div>
<svg style="position:absolute;left:498px;top:115px" width="22" height="22" viewBox="0 0 22 22"><g transform="translate(11.9,12.9) rotate(-40) scale(1.05)"><rect x="-4.5" y="-8.3" width="2.15" height="9" rx="1.07" fill="#f9c23c"/><rect x="-2.25" y="-9.9" width="2.15" height="10" rx="1.07" fill="#f9c23c"/><rect x="0" y="-9.6" width="2.15" height="10" rx="1.07" fill="#f9c23c"/><rect x="2.25" y="-8" width="2.15" height="9" rx="1.07" fill="#f9c23c"/><path d="M-4.5 -2.5 H4.4 V2.2 a4.45 4.3 0 0 1 -8.9 0 Z" fill="#f9c23c"/><path d="M2.6 1.6 L6.2 -3.2 a1.25 1.25 0 0 1 2 1.5 L4.9 4.2 Z" fill="#f9c23c"/><path d="M-2.3 -7 V-2 M-0.05 -8 V-2 M2.2 -7 V-2" stroke="#e3a21c" stroke-width="0.45" fill="none"/><path d="M-4.5 2 a4.45 4.3 0 0 0 8 2.6" stroke="#eaa91f" stroke-width="0.9" fill="none"/></g><path d="M12.3 2.6 a3.4 3.4 0 0 1 1.9 1.9 M2.2 12.6 a3.6 3.6 0 0 0 1.6 2.6" fill="none" stroke="#4a505c" stroke-width="0.8" stroke-linecap="round"/></svg>
<div style="position:absolute;left:351.20px;top:140.24px;line-height:8.11px;font-size:6.76px;color:#e4e6ea;font-weight:400;white-space:nowrap;">Ready? Set. Coordinate! Let's jump right into things.</div>
<div style="position:absolute;left:245.60px;top:153.60px;width:6.70px;height:6.80px;background:#2f9a66;border-radius:1.2px"></div>
<svg style="position:absolute;left:246.3px;top:154.6px" width="5.4" height="5" viewBox="0 0 5.4 5"><path d="M0.7 2.6 L2.1 4 L4.7 0.9" fill="none" stroke="#fff" stroke-width="0.9"/></svg>
<div style="position:absolute;left:255.80px;top:153.56px;line-height:7.88px;font-size:6.57px;color:#e9ebef;font-weight:400;white-space:nowrap;">All Sites</div>
<div style="position:absolute;left:245.40px;top:165.70px;width:89.20px;height:39.00px;background:#2b3243;border:1px solid #4b5468;border-radius:3px;box-sizing:border-box"></div>
<div style="position:absolute;left:253.70px;top:171.78px;line-height:9.24px;font-size:7.7px;color:#e9ebef;font-weight:400;white-space:nowrap;letter-spacing:-0.17px;">Frequencies</div>
<div style="position:absolute;left:253.50px;top:183.74px;line-height:16.32px;font-size:13.6px;color:#fafbfc;font-weight:700;white-space:nowrap;letter-spacing:1.3px">292</div>
<div style="position:absolute;left:338.45px;top:165.70px;width:89.20px;height:39.00px;background:#2b3243;border:1px solid #4b5468;border-radius:3px;box-sizing:border-box"></div>
<div style="position:absolute;left:346.75px;top:171.78px;line-height:9.24px;font-size:7.7px;color:#e9ebef;font-weight:400;white-space:nowrap;letter-spacing:-0.17px;">Groups</div>
<div style="position:absolute;left:346.55px;top:183.74px;line-height:16.32px;font-size:13.6px;color:#fafbfc;font-weight:700;white-space:nowrap;letter-spacing:1.3px">10</div>
<div style="position:absolute;left:431.50px;top:165.70px;width:89.20px;height:39.00px;background:#2b3243;border:1px solid #4b5468;border-radius:3px;box-sizing:border-box"></div>
<div style="position:absolute;left:439.80px;top:171.78px;line-height:9.24px;font-size:7.7px;color:#e9ebef;font-weight:400;white-space:nowrap;letter-spacing:-0.17px;">Zones</div>
<div style="position:absolute;left:439.60px;top:183.74px;line-height:16.32px;font-size:13.6px;color:#fafbfc;font-weight:700;white-space:nowrap;letter-spacing:1.3px">6</div>
<div style="position:absolute;left:524.55px;top:165.70px;width:89.20px;height:39.00px;background:#2b3243;border:1px solid #4b5468;border-radius:3px;box-sizing:border-box"></div>
<div style="position:absolute;left:532.85px;top:171.78px;line-height:9.24px;font-size:7.7px;color:#e9ebef;font-weight:400;white-space:nowrap;letter-spacing:-0.17px;">Sites</div>
<div style="position:absolute;left:532.65px;top:183.74px;line-height:16.32px;font-size:13.6px;color:#fafbfc;font-weight:700;white-space:nowrap;letter-spacing:1.3px">2</div>
<div style="position:absolute;left:245.40px;top:208.90px;width:89.20px;height:39.00px;background:#2b3243;border:1px solid #4b5468;border-radius:3px;box-sizing:border-box"></div>
<div style="position:absolute;left:253.70px;top:214.98px;line-height:9.24px;font-size:7.7px;color:#e9ebef;font-weight:400;white-space:nowrap;letter-spacing:-0.17px;">TV Channels</div>
<div style="position:absolute;left:253.50px;top:226.94px;line-height:16.32px;font-size:13.6px;color:#fafbfc;font-weight:700;white-space:nowrap;letter-spacing:1.3px">31</div>
<div style="position:absolute;left:338.45px;top:208.90px;width:89.20px;height:39.00px;background:#2b3243;border:1px solid #4b5468;border-radius:3px;box-sizing:border-box"></div>
<div style="position:absolute;left:346.75px;top:214.98px;line-height:9.24px;font-size:7.7px;color:#e9ebef;font-weight:400;white-space:nowrap;letter-spacing:-0.17px;">Band Plans</div>
<div style="position:absolute;left:346.55px;top:226.94px;line-height:16.32px;font-size:13.6px;color:#fafbfc;font-weight:700;white-space:nowrap;letter-spacing:1.3px">4</div>
<div style="position:absolute;left:431.50px;top:208.90px;width:89.20px;height:39.00px;background:#2b3243;border:1px solid #4b5468;border-radius:3px;box-sizing:border-box"></div>
<div style="position:absolute;left:439.80px;top:214.98px;line-height:9.24px;font-size:7.7px;color:#e9ebef;font-weight:400;white-space:nowrap;letter-spacing:-0.17px;">Exclusions</div>
<div style="position:absolute;left:439.60px;top:226.94px;line-height:16.32px;font-size:13.6px;color:#fafbfc;font-weight:700;white-space:nowrap;letter-spacing:1.3px">0</div>
<div style="position:absolute;left:524.55px;top:208.90px;width:89.20px;height:39.00px;background:#2b3243;border:1px solid #4b5468;border-radius:3px;box-sizing:border-box"></div>
<div style="position:absolute;left:532.85px;top:214.98px;line-height:9.24px;font-size:7.7px;color:#e9ebef;font-weight:400;white-space:nowrap;letter-spacing:-0.17px;">Scan Files</div>
<div style="position:absolute;left:532.65px;top:226.94px;line-height:16.32px;font-size:13.6px;color:#fafbfc;font-weight:700;white-space:nowrap;letter-spacing:1.3px">3</div>
<div style="position:absolute;left:245.40px;top:251.30px;width:89.20px;height:6.50px;background:#2b3243;border:1px solid #4b5468;border-bottom:none;border-radius:3px 3px 0 0;box-sizing:border-box"></div>
<div style="position:absolute;left:338.45px;top:251.30px;width:89.20px;height:6.50px;background:#2b3243;border:1px solid #4b5468;border-bottom:none;border-radius:3px 3px 0 0;box-sizing:border-box"></div>
<div style="position:absolute;left:431.50px;top:251.30px;width:89.20px;height:6.50px;background:#2b3243;border:1px solid #4b5468;border-bottom:none;border-radius:3px 3px 0 0;box-sizing:border-box"></div>
<div style="position:absolute;left:524.55px;top:251.30px;width:89.20px;height:6.50px;background:#2b3243;border:1px solid #4b5468;border-bottom:none;border-radius:3px 3px 0 0;box-sizing:border-box"></div>
<div style="position:absolute;left:624.20px;top:93.30px;width:81.20px;height:166.00px;background:#12151d;border:1px solid #2f8259;border-radius:4px;box-sizing:border-box"></div>
<div style="position:absolute;left:700.30px;top:95.50px;width:4.10px;height:93.90px;background:#697078;border-radius:1.6px"></div>
<div style="position:absolute;left:628.90px;top:95.89px;line-height:6.82px;font-size:5.68px;color:#f1f2f4;font-weight:700;white-space:nowrap;">Profile type</div>
<div style="position:absolute;left:628.70px;top:104.40px;width:68.10px;height:10.60px;background:#161a24;border:0.7px solid #283040;border-radius:3px;box-sizing:border-box"></div>
<div style="position:absolute;left:633.10px;top:106.90px;line-height:7.00px;font-size:5.83px;color:#d3d6de;font-weight:400;white-space:nowrap;">Favorites</div>
<svg style="position:absolute;left:686.5px;top:107.3px" width="6" height="5" viewBox="0 0 6 5"><path d="M0.9 1.3 L3 3.5 L5.1 1.3" fill="none" stroke="#f3f5f8" stroke-width="1.25"/></svg>
<div style="position:absolute;left:628.90px;top:117.79px;line-height:6.82px;font-size:5.68px;color:#f1f2f4;font-weight:700;white-space:nowrap;">Manufacturer</div>
<div style="position:absolute;left:628.70px;top:125.70px;width:68.10px;height:10.50px;background:#161a24;border:0.7px solid #283040;border-radius:3px;box-sizing:border-box"></div>
<div style="position:absolute;left:633.10px;top:128.15px;line-height:7.00px;font-size:5.83px;color:#d3d6de;font-weight:400;white-space:nowrap;">Select make</div>
<svg style="position:absolute;left:686.5px;top:128.54999999999998px" width="6" height="5" viewBox="0 0 6 5"><path d="M0.9 1.3 L3 3.5 L5.1 1.3" fill="none" stroke="#f3f5f8" stroke-width="1.25"/></svg>
<div style="position:absolute;left:628.90px;top:139.29px;line-height:6.82px;font-size:5.68px;color:#f1f2f4;font-weight:700;white-space:nowrap;">Model</div>
<div style="position:absolute;left:628.70px;top:147.10px;width:68.10px;height:10.50px;background:#161a24;border:0.7px solid #283040;border-radius:3px;box-sizing:border-box"></div>
<div style="position:absolute;left:633.10px;top:149.55px;line-height:7.00px;font-size:5.83px;color:#d3d6de;font-weight:400;white-space:nowrap;">Select model</div>
<svg style="position:absolute;left:686.5px;top:149.95px" width="6" height="5" viewBox="0 0 6 5"><path d="M0.9 1.3 L3 3.5 L5.1 1.3" fill="none" stroke="#f3f5f8" stroke-width="1.25"/></svg>
<div style="position:absolute;left:628.90px;top:160.79px;line-height:6.82px;font-size:5.68px;color:#f1f2f4;font-weight:700;white-space:nowrap;">Frequency band</div>
<div style="position:absolute;left:628.70px;top:168.60px;width:68.10px;height:10.50px;background:#161a24;border:0.7px solid #283040;border-radius:3px;box-sizing:border-box"></div>
<div style="position:absolute;left:633.10px;top:171.05px;line-height:7.00px;font-size:5.83px;color:#d3d6de;font-weight:400;white-space:nowrap;">Select band</div>
<svg style="position:absolute;left:686.5px;top:171.45px" width="6" height="5" viewBox="0 0 6 5"><path d="M0.9 1.3 L3 3.5 L5.1 1.3" fill="none" stroke="#f3f5f8" stroke-width="1.25"/></svg>
<div style="position:absolute;left:628.90px;top:182.29px;line-height:6.82px;font-size:5.68px;color:#f1f2f4;font-weight:700;white-space:nowrap;">RF profile</div>
<div style="position:absolute;left:628.70px;top:190.60px;width:68.10px;height:10.60px;background:#161a24;border:0.7px solid #283040;border-radius:3px;box-sizing:border-box"></div>
<div style="position:absolute;left:633.10px;top:193.10px;line-height:7.00px;font-size:5.83px;color:#d3d6de;font-weight:400;white-space:nowrap;">Select profile</div>
<svg style="position:absolute;left:686.5px;top:193.49999999999997px" width="6" height="5" viewBox="0 0 6 5"><path d="M0.9 1.3 L3 3.5 L5.1 1.3" fill="none" stroke="#f3f5f8" stroke-width="1.25"/></svg>
<div style="position:absolute;left:628.60px;top:206.70px;width:6.60px;height:6.60px;border:0.8px solid #5d6473;border-radius:1.2px;box-sizing:border-box"></div>
<div style="position:absolute;left:640.70px;top:206.68px;line-height:7.24px;font-size:6.03px;color:#dfe2e8;font-weight:400;white-space:nowrap;">Profile auto-focus</div>
<div style="position:absolute;left:628.70px;top:219.40px;width:68.10px;height:0.50px;background:#272d3a"></div>
<div style="position:absolute;left:628.90px;top:224.59px;line-height:6.82px;font-size:5.68px;color:#f1f2f4;font-weight:700;white-space:nowrap;">Band plan</div>
<div style="position:absolute;left:628.70px;top:233.30px;width:55.10px;height:7.70px;background:#171b25;border:0.7px solid #283040;border-radius:2.5px;box-sizing:border-box"></div>
<div style="position:absolute;left:686.20px;top:233.00px;width:10.60px;height:8.00px;background:#232937;border-radius:2.5px"></div>
<div style="position:absolute;left:689.30px;top:236.60px;width:4.70px;height:0.90px;background:#767d8a"></div>
<div style="position:absolute;left:628.50px;top:240.20px;width:68.30px;height:14.40px;background:#24583f;border-radius:2.5px"></div>
<div style="position:absolute;left:662.60px;top:244.05px;line-height:7.70px;font-size:6.42px;color:#4e8368;font-weight:700;white-space:nowrap;transform:translateX(-50%);">Search</div>
<div style="position:absolute;left:29.40px;top:262.30px;width:676.00px;height:140.30px;background:#12151d;border:1px solid #2f8259;border-bottom-color:#24353a;border-radius:4px;box-sizing:border-box"></div>
<div style="position:absolute;left:32.60px;top:264.00px;width:112.00px;height:10.60px;background:#1d222d;border-radius:2.5px"></div>
<svg style="position:absolute;left:34.3px;top:265.7px" width="7.4" height="7.4" viewBox="0 0 8 8"><path d="M6.9 3.3 A3 3 0 0 0 1.3 2.8 M1.1 4.7 A3 3 0 0 0 6.7 5.2" fill="none" stroke="#f0f2f5" stroke-width="1.1"/><path d="M0.3 1.2 L1 3.6 L3.2 2.8 Z M7.7 6.8 L7 4.4 L4.8 5.2 Z" fill="#f0f2f5"/></svg>
<svg style="position:absolute;left:45.699999999999996px;top:265.7px" width="7.4" height="7.4" viewBox="0 0 8 8"><circle cx="3.6" cy="3.6" r="2.8" fill="none" stroke="#f0f2f5" stroke-width="0.95"/><path d="M5.8 5.8 L7.3 7.3" stroke="#f0f2f5" stroke-width="1.1" stroke-linecap="round"/><path d="M2.4 3.6 H4.8 M3.6 2.4 V4.8" stroke="#f0f2f5" stroke-width="0.7"/></svg>
<svg style="position:absolute;left:56.9px;top:265.7px" width="7.4" height="7.4" viewBox="0 0 8 8"><circle cx="3.6" cy="3.6" r="2.8" fill="none" stroke="#f0f2f5" stroke-width="0.95"/><path d="M5.8 5.8 L7.3 7.3" stroke="#f0f2f5" stroke-width="1.1" stroke-linecap="round"/><path d="M2.4 3.6 H4.8" stroke="#f0f2f5" stroke-width="0.7"/></svg>
<svg style="position:absolute;left:68.1px;top:265.7px" width="7.4" height="7.4" viewBox="0 0 8 8"><circle cx="3.6" cy="3.6" r="2.8" fill="none" stroke="#f0f2f5" stroke-width="0.95"/><path d="M5.8 5.8 L7.3 7.3" stroke="#f0f2f5" stroke-width="1.1" stroke-linecap="round"/></svg>
<svg style="position:absolute;left:79.3px;top:265.7px" width="7.4" height="7.4" viewBox="0 0 8 8"><circle cx="4" cy="4" r="3" fill="none" stroke="#f0f2f5" stroke-width="1.3"/><path d="M1.2 1.2 L2.4 2.4 M6.8 1.2 L5.6 2.4 M1.2 6.8 L2.4 5.6 M6.8 6.8 L5.6 5.6" stroke="#1d222d" stroke-width="0.8"/></svg>
<svg style="position:absolute;left:90.39999999999999px;top:265.7px" width="7.4" height="7.4" viewBox="0 0 8 8"><path d="M1.5 0.6 V7.4 M4 0.6 V7.4 M6.5 0.6 V7.4" stroke="#f0f2f5" stroke-width="0.8"/><path d="M0.5 5 H2.5 M3 2.4 H5 M5.5 4.4 H7.5" stroke="#f0f2f5" stroke-width="1.3"/></svg>
<svg style="position:absolute;left:101.5px;top:265.7px" width="7.4" height="7.4" viewBox="0 0 8 8"><path d="M0.5 2.2 H2.3 L2.9 1.2 H5.1 L5.7 2.2 H7.5 V6.8 H0.5 Z" fill="none" stroke="#f0f2f5" stroke-width="1.2" stroke-linejoin="round"/><circle cx="4" cy="4.4" r="1.4" fill="none" stroke="#f0f2f5" stroke-width="0.8"/></svg>
<svg style="position:absolute;left:112.6px;top:265.7px" width="7.4" height="7.4" viewBox="0 0 8 8"><path d="M4 1.6 L7.4 6.4 H0.6 Z" fill="#f0f2f5"/></svg>
<svg style="position:absolute;left:123.8px;top:265.7px" width="7.4" height="7.4" viewBox="0 0 8 8"><path d="M0.8 2.8 V0.8 H2.8 M5.2 0.8 H7.2 V2.8 M7.2 5.2 V7.2 H5.2 M2.8 7.2 H0.8 V5.2" fill="none" stroke="#f0f2f5" stroke-width="1"/></svg>
<svg style="position:absolute;left:135.39999999999998px;top:266.09999999999997px" width="6.6" height="6.6" viewBox="0 0 7.4 7.4"><rect x="3.05" y="0" width="1.3" height="7.4" transform="rotate(0 3.7 3.7)" fill="#f0f2f5"/><rect x="3.05" y="0" width="1.3" height="7.4" transform="rotate(45 3.7 3.7)" fill="#f0f2f5"/><rect x="3.05" y="0" width="1.3" height="7.4" transform="rotate(90 3.7 3.7)" fill="#f0f2f5"/><rect x="3.05" y="0" width="1.3" height="7.4" transform="rotate(135 3.7 3.7)" fill="#f0f2f5"/><circle cx="3.7" cy="3.7" r="2.7" fill="#f0f2f5"/><circle cx="3.7" cy="3.7" r="1.15" fill="#232937"/></svg>
<svg style="position:absolute;left:137.2px;top:267.9px" width="3" height="3"><circle cx="1.5" cy="1.5" r="1.2" fill="#1d222d"/></svg>
<div style="position:absolute;left:148.60px;top:264.00px;width:57.40px;height:10.60px;background:#171b25;border:0.7px solid #283040;border-radius:2.5px;box-sizing:border-box"></div>
<div style="position:absolute;left:152.00px;top:266.33px;line-height:6.95px;font-size:5.79px;color:#dfe2e8;font-weight:400;white-space:nowrap;">All zones</div>
<svg style="position:absolute;left:195.8px;top:267.09999999999997px" width="6" height="5" viewBox="0 0 6 5"><path d="M0.9 1.3 L3 3.5 L5.1 1.3" fill="none" stroke="#f3f5f8" stroke-width="1.25"/></svg>
<div style="position:absolute;left:270.40px;top:264.00px;width:9.20px;height:10.60px;background:#232937;border-radius:2.5px"></div>
<svg style="position:absolute;left:272px;top:266.4px" width="6" height="6" viewBox="0 0 6 6"><path d="M5.4 3 H0.9 M2.9 0.8 L0.7 3 L2.9 5.2" fill="none" stroke="#f0f2f5" stroke-width="0.9"/></svg>
<div style="position:absolute;left:284.00px;top:264.00px;width:58.00px;height:10.70px;background:#171b25;border:0.8px solid #286e4d;border-radius:2.5px;box-sizing:border-box;overflow:hidden"></div>
<div style="position:absolute;left:284.80px;top:264.80px;width:21.00px;height:9.10px;background:#16271f;border-right:0.6px solid #286e4d;box-sizing:border-box;border-radius:1.8px 0 0 1.8px"></div>
<div style="position:absolute;left:295.10px;top:266.32px;line-height:6.96px;font-size:5.8px;color:#2f9364;font-weight:700;white-space:nowrap;transform:translateX(-50%);">Start</div>
<div style="position:absolute;left:310.30px;top:266.33px;line-height:6.94px;font-size:5.78px;color:#e9ebef;font-weight:400;white-space:nowrap;">470.025</div>
<div style="position:absolute;left:345.40px;top:264.00px;width:58.40px;height:10.70px;background:#171b25;border:0.8px solid #b57a2a;border-radius:2.5px;box-sizing:border-box;overflow:hidden"></div>
<div style="position:absolute;left:346.20px;top:264.80px;width:26.10px;height:9.10px;background:#3a2b17;border-right:0.6px solid #b57a2a;box-sizing:border-box;border-radius:1.8px 0 0 1.8px"></div>
<div style="position:absolute;left:359.05px;top:266.32px;line-height:6.96px;font-size:5.8px;color:#d08a2c;font-weight:700;white-space:nowrap;transform:translateX(-50%);">Center</div>
<div style="position:absolute;left:376.80px;top:266.33px;line-height:6.94px;font-size:5.78px;color:#e9ebef;font-weight:400;white-space:nowrap;">543.011</div>
<div style="position:absolute;left:407.30px;top:264.00px;width:58.40px;height:10.70px;background:#171b25;border:0.8px solid #c0403a;border-radius:2.5px;box-sizing:border-box;overflow:hidden"></div>
<div style="position:absolute;left:408.10px;top:264.80px;width:19.90px;height:9.10px;background:#3d1c1c;border-right:0.6px solid #c0403a;box-sizing:border-box;border-radius:1.8px 0 0 1.8px"></div>
<div style="position:absolute;left:417.85px;top:266.32px;line-height:6.96px;font-size:5.8px;color:#e0463a;font-weight:700;white-space:nowrap;transform:translateX(-50%);">Stop</div>
<div style="position:absolute;left:432.50px;top:266.33px;line-height:6.94px;font-size:5.78px;color:#e9ebef;font-weight:400;white-space:nowrap;">615.998</div>
<div style="position:absolute;left:469.00px;top:264.00px;width:58.80px;height:10.70px;background:#171b25;border:0.8px solid #2a6cb8;border-radius:2.5px;box-sizing:border-box;overflow:hidden"></div>
<div style="position:absolute;left:469.80px;top:264.80px;width:22.20px;height:9.10px;background:#172a45;border-right:0.6px solid #2a6cb8;box-sizing:border-box;border-radius:1.8px 0 0 1.8px"></div>
<div style="position:absolute;left:480.70px;top:266.32px;line-height:6.96px;font-size:5.8px;color:#2f7fd1;font-weight:700;white-space:nowrap;transform:translateX(-50%);">Span</div>
<div style="position:absolute;left:496.50px;top:266.33px;line-height:6.94px;font-size:5.78px;color:#e9ebef;font-weight:400;white-space:nowrap;">145.973</div>
<svg style="position:absolute;left:533.8px;top:266.4px" width="6" height="6" viewBox="0 0 6 6"><path d="M0.6 3 H5.1 M3.1 0.8 L5.3 3 L3.1 5.2" fill="none" stroke="#454c5b" stroke-width="0.9"/></svg>
<div style="position:absolute;left:609.60px;top:264.00px;width:92.40px;height:10.60px;background:#171b25;border:0.7px solid #283040;border-radius:2.5px;box-sizing:border-box"></div>
<div style="position:absolute;left:612.50px;top:266.23px;line-height:7.14px;font-size:5.95px;color:#dfe2e8;font-weight:400;white-space:nowrap;">Spring Studios 4/23/22_c...</div>
<svg style="position:absolute;left:691.8px;top:267.09999999999997px" width="6" height="5" viewBox="0 0 6 5"><path d="M0.9 1.3 L3 3.5 L5.1 1.3" fill="none" stroke="#f3f5f8" stroke-width="1.25"/></svg>
<svg style="position:absolute;left:0;top:0" width="736" height="442" viewBox="0 0 736 442" font-family='"Liberation Sans", sans-serif'>
<rect x="209.05" y="277.3" width="26.94" height="4.4" rx="0.6" fill="#50b584"/>
<text x="222.52" y="280.9" font-size="3.4" font-weight="700" fill="#e6fff2" text-anchor="middle">Rooftop</text>
<rect x="128.22" y="282.3" width="458.04" height="5" rx="0.6" fill="#50b584"/>
<text x="357.5" y="286.2" font-size="3.4" font-weight="700" fill="#e6fff2" text-anchor="middle">Vendor Mic...</text>
<rect x="694.03" y="282.3" width="8.97" height="5" rx="0.6" fill="#50b584"/>
<rect x="47.5" y="365.2" width="655.5" height="10.2" rx="2" fill="#181d29"/>
<rect x="47.50" y="288.7" width="26.83" height="76.50" fill="#8a342f"/>
<rect x="74.33" y="288.7" width="26.94" height="76.50" fill="#8a342f"/>
<rect x="101.27" y="288.7" width="26.94" height="76.50" fill="#8a342f"/>
<rect x="128.22" y="288.7" width="26.94" height="76.50" fill="#10141c"/>
<rect x="155.16" y="288.7" width="26.94" height="76.50" fill="#8a7152"/>
<rect x="182.10" y="288.7" width="26.94" height="76.50" fill="#8a342f"/>
<rect x="209.05" y="288.7" width="26.94" height="76.50" fill="#10141c"/>
<rect x="235.99" y="288.7" width="26.94" height="76.50" fill="#8a7152"/>
<rect x="262.93" y="288.7" width="26.94" height="76.50" fill="#8a7152"/>
<rect x="289.88" y="288.7" width="26.94" height="76.50" fill="#8a7152"/>
<rect x="316.82" y="288.7" width="26.94" height="76.50" fill="#8a7152"/>
<rect x="343.76" y="288.7" width="26.94" height="76.50" fill="#8a7152"/>
<rect x="370.71" y="288.7" width="26.94" height="76.50" fill="#8a7152"/>
<rect x="397.65" y="288.7" width="26.94" height="76.50" fill="#8a7152"/>
<rect x="424.59" y="288.7" width="26.94" height="76.50" fill="#10141c"/>
<rect x="451.54" y="288.7" width="26.94" height="76.50" fill="#8a7152"/>
<rect x="478.48" y="288.7" width="26.94" height="76.50" fill="#10141c"/>
<rect x="505.42" y="288.7" width="26.94" height="76.50" fill="#8a7152"/>
<rect x="532.37" y="288.7" width="26.94" height="76.50" fill="#8a7152"/>
<rect x="559.31" y="288.7" width="26.94" height="76.50" fill="#10141c"/>
<rect x="586.25" y="288.7" width="26.94" height="76.50" fill="#8a7152"/>
<rect x="613.20" y="288.7" width="26.94" height="76.50" fill="#8a7152"/>
<rect x="640.14" y="288.7" width="26.94" height="76.50" fill="#8a7152"/>
<rect x="667.08" y="288.7" width="26.94" height="76.50" fill="#2a6c79"/>
<rect x="694.03" y="288.7" width="8.97" height="76.50" fill="#10141c"/>
<g>
<rect x="127.81" y="288.7" width="3.13" height="76.50" fill="#3f7a2c" opacity="0.38"/>
<rect x="128.66" y="288.7" width="1.43" height="76.50" fill="#3f7a2c" opacity="0.8"/>
<rect x="132.09" y="288.7" width="2.93" height="76.50" fill="#b5b040" opacity="0.38"/>
<rect x="132.94" y="288.7" width="1.23" height="76.50" fill="#b5b040" opacity="0.8"/>
<rect x="133.92" y="288.7" width="2.72" height="76.50" fill="#2a8092" opacity="0.38"/>
<rect x="134.77" y="288.7" width="1.02" height="76.50" fill="#2a8092" opacity="0.8"/>
<rect x="135.55" y="288.7" width="2.93" height="76.50" fill="#e0c548" opacity="0.38"/>
<rect x="136.40" y="288.7" width="1.23" height="76.50" fill="#e0c548" opacity="0.8"/>
<rect x="139.63" y="288.7" width="3.54" height="76.50" fill="#2d80c4" opacity="0.38"/>
<rect x="140.48" y="288.7" width="1.84" height="76.50" fill="#2d80c4" opacity="0.8"/>
<rect x="142.07" y="288.7" width="2.72" height="76.50" fill="#e0c548" opacity="0.38"/>
<rect x="142.92" y="288.7" width="1.02" height="76.50" fill="#e0c548" opacity="0.8"/>
<rect x="144.11" y="288.7" width="2.72" height="76.50" fill="#b5b040" opacity="0.38"/>
<rect x="144.96" y="288.7" width="1.02" height="76.50" fill="#b5b040" opacity="0.8"/>
<rect x="145.74" y="288.7" width="3.13" height="76.50" fill="#2f8a6a" opacity="0.38"/>
<rect x="146.59" y="288.7" width="1.43" height="76.50" fill="#2f8a6a" opacity="0.8"/>
<rect x="147.78" y="288.7" width="2.93" height="76.50" fill="#2d80c4" opacity="0.38"/>
<rect x="148.63" y="288.7" width="1.23" height="76.50" fill="#2d80c4" opacity="0.8"/>
<rect x="149.82" y="288.7" width="3.54" height="76.50" fill="#4e8f2c" opacity="0.38"/>
<rect x="150.67" y="288.7" width="1.84" height="76.50" fill="#4e8f2c" opacity="0.8"/>
<rect x="152.26" y="288.7" width="3.74" height="76.50" fill="#5a9a30" opacity="0.38"/>
<rect x="153.11" y="288.7" width="2.04" height="76.50" fill="#5a9a30" opacity="0.8"/>
<rect x="215.44" y="288.7" width="3.54" height="76.50" fill="#c13fd0" opacity="0.38"/>
<rect x="216.29" y="288.7" width="1.84" height="76.50" fill="#c13fd0" opacity="0.8"/>
<rect x="220.13" y="288.7" width="4.35" height="76.50" fill="#2f6a22" opacity="0.38"/>
<rect x="220.98" y="288.7" width="2.65" height="76.50" fill="#2f6a22" opacity="0.8"/>
<rect x="226.04" y="288.7" width="3.74" height="76.50" fill="#c13fd0" opacity="0.38"/>
<rect x="226.89" y="288.7" width="2.04" height="76.50" fill="#c13fd0" opacity="0.8"/>
<rect x="229.09" y="288.7" width="4.96" height="76.50" fill="#c13fd0" opacity="0.38"/>
<rect x="229.94" y="288.7" width="3.26" height="76.50" fill="#c13fd0" opacity="0.8"/>
<rect x="425.46" y="288.7" width="2.93" height="76.50" fill="#e0c548" opacity="0.38"/>
<rect x="426.31" y="288.7" width="1.23" height="76.50" fill="#e0c548" opacity="0.8"/>
<rect x="427.29" y="288.7" width="2.72" height="76.50" fill="#1f5f7a" opacity="0.38"/>
<rect x="428.14" y="288.7" width="1.02" height="76.50" fill="#1f5f7a" opacity="0.8"/>
<rect x="428.92" y="288.7" width="3.13" height="76.50" fill="#9fc4d8" opacity="0.38"/>
<rect x="429.77" y="288.7" width="1.43" height="76.50" fill="#9fc4d8" opacity="0.8"/>
<rect x="430.96" y="288.7" width="4.15" height="76.50" fill="#2d80c4" opacity="0.38"/>
<rect x="431.81" y="288.7" width="2.45" height="76.50" fill="#2d80c4" opacity="0.8"/>
<rect x="435.65" y="288.7" width="4.56" height="76.50" fill="#2d80c4" opacity="0.38"/>
<rect x="436.50" y="288.7" width="2.86" height="76.50" fill="#2d80c4" opacity="0.8"/>
<rect x="439.11" y="288.7" width="2.72" height="76.50" fill="#d8cf8a" opacity="0.38"/>
<rect x="439.96" y="288.7" width="1.02" height="76.50" fill="#d8cf8a" opacity="0.8"/>
<rect x="440.74" y="288.7" width="2.72" height="76.50" fill="#2d80c4" opacity="0.38"/>
<rect x="441.59" y="288.7" width="1.02" height="76.50" fill="#2d80c4" opacity="0.8"/>
<rect x="442.78" y="288.7" width="3.13" height="76.50" fill="#e0c548" opacity="0.38"/>
<rect x="443.63" y="288.7" width="1.43" height="76.50" fill="#e0c548" opacity="0.8"/>
<rect x="449.30" y="288.7" width="3.13" height="76.50" fill="#e0c548" opacity="0.38"/>
<rect x="450.15" y="288.7" width="1.43" height="76.50" fill="#e0c548" opacity="0.8"/>
<rect x="453.99" y="288.7" width="2.52" height="76.50" fill="#e0c548" opacity="0.38"/>
<rect x="454.84" y="288.7" width="0.82" height="76.50" fill="#e0c548" opacity="0.8"/>
<rect x="455.62" y="288.7" width="2.93" height="76.50" fill="#8db5c8" opacity="0.38"/>
<rect x="456.47" y="288.7" width="1.23" height="76.50" fill="#8db5c8" opacity="0.8"/>
<rect x="476.41" y="288.7" width="3.13" height="76.50" fill="#e0c548" opacity="0.38"/>
<rect x="477.26" y="288.7" width="1.43" height="76.50" fill="#e0c548" opacity="0.8"/>
<rect x="479.87" y="288.7" width="2.72" height="76.50" fill="#e0c548" opacity="0.38"/>
<rect x="480.72" y="288.7" width="1.02" height="76.50" fill="#e0c548" opacity="0.8"/>
<rect x="483.13" y="288.7" width="15.15" height="76.50" fill="#2d80c4" opacity="0.38"/>
<rect x="483.98" y="288.7" width="13.45" height="76.50" fill="#2d80c4" opacity="0.8"/>
<rect x="485.37" y="288.7" width="2.11" height="76.50" fill="#1f5f9a" opacity="0.38"/>
<rect x="486.22" y="288.7" width="0.41" height="76.50" fill="#1f5f9a" opacity="0.8"/>
<rect x="489.86" y="288.7" width="2.11" height="76.50" fill="#1f5f9a" opacity="0.38"/>
<rect x="490.71" y="288.7" width="0.41" height="76.50" fill="#1f5f9a" opacity="0.8"/>
<rect x="492.51" y="288.7" width="2.11" height="76.50" fill="#1f5f9a" opacity="0.38"/>
<rect x="493.36" y="288.7" width="0.41" height="76.50" fill="#1f5f9a" opacity="0.8"/>
<rect x="494.54" y="288.7" width="2.11" height="76.50" fill="#1f5f9a" opacity="0.38"/>
<rect x="495.39" y="288.7" width="0.41" height="76.50" fill="#1f5f9a" opacity="0.8"/>
<rect x="497.40" y="288.7" width="2.11" height="76.50" fill="#2d80c4" opacity="0.38"/>
<rect x="498.25" y="288.7" width="0.41" height="76.50" fill="#2d80c4" opacity="0.8"/>
<rect x="498.62" y="288.7" width="2.32" height="76.50" fill="#1f5f9a" opacity="0.38"/>
<rect x="499.47" y="288.7" width="0.62" height="76.50" fill="#1f5f9a" opacity="0.8"/>
<rect x="500.86" y="288.7" width="5.17" height="76.50" fill="#2a5a1f" opacity="0.38"/>
<rect x="501.71" y="288.7" width="3.47" height="76.50" fill="#2a5a1f" opacity="0.8"/>
<rect x="559.25" y="288.7" width="3.13" height="76.50" fill="#3a3f48" opacity="0.38"/>
<rect x="560.10" y="288.7" width="1.43" height="76.50" fill="#3a3f48" opacity="0.8"/>
<rect x="561.29" y="288.7" width="3.13" height="76.50" fill="#5a9a30" opacity="0.38"/>
<rect x="562.14" y="288.7" width="1.43" height="76.50" fill="#5a9a30" opacity="0.8"/>
<rect x="564.75" y="288.7" width="4.15" height="76.50" fill="#2a8092" opacity="0.38"/>
<rect x="565.60" y="288.7" width="2.45" height="76.50" fill="#2a8092" opacity="0.8"/>
<rect x="569.85" y="288.7" width="2.72" height="76.50" fill="#9aa030" opacity="0.38"/>
<rect x="570.70" y="288.7" width="1.02" height="76.50" fill="#9aa030" opacity="0.8"/>
<rect x="571.07" y="288.7" width="3.54" height="76.50" fill="#e08020" opacity="0.38"/>
<rect x="571.92" y="288.7" width="1.84" height="76.50" fill="#e08020" opacity="0.8"/>
<rect x="573.11" y="288.7" width="3.95" height="76.50" fill="#e8a030" opacity="0.38"/>
<rect x="573.96" y="288.7" width="2.25" height="76.50" fill="#e8a030" opacity="0.8"/>
<rect x="575.96" y="288.7" width="4.15" height="76.50" fill="#e0a028" opacity="0.38"/>
<rect x="576.81" y="288.7" width="2.45" height="76.50" fill="#e0a028" opacity="0.8"/>
<rect x="580.65" y="288.7" width="3.54" height="76.50" fill="#d08a2a" opacity="0.38"/>
<rect x="581.50" y="288.7" width="1.84" height="76.50" fill="#d08a2a" opacity="0.8"/>
<rect x="583.30" y="288.7" width="3.74" height="76.50" fill="#2d80c4" opacity="0.38"/>
<rect x="584.15" y="288.7" width="2.04" height="76.50" fill="#2d80c4" opacity="0.8"/>
<rect x="693.34" y="288.7" width="2.93" height="76.50" fill="#5a9a30" opacity="0.38"/>
<rect x="694.19" y="288.7" width="1.23" height="76.50" fill="#5a9a30" opacity="0.8"/>
<rect x="696.40" y="288.7" width="2.93" height="76.50" fill="#e0c548" opacity="0.38"/>
<rect x="697.25" y="288.7" width="1.23" height="76.50" fill="#e0c548" opacity="0.8"/>
<rect x="699.46" y="288.7" width="4.15" height="76.50" fill="#2d80c4" opacity="0.38"/>
<rect x="700.31" y="288.7" width="2.45" height="76.50" fill="#2d80c4" opacity="0.8"/>
</g>
<rect x="73.98" y="288.7" width="0.7" height="76.50" fill="#e9c9c4" opacity="0.95"/>
<rect x="100.92" y="288.7" width="0.7" height="76.50" fill="#e9c9c4" opacity="0.95"/>
<rect x="127.87" y="288.7" width="0.7" height="76.50" fill="#e9c9c4" opacity="0.95"/>
<rect x="154.81" y="288.7" width="0.7" height="76.50" fill="#d9c9ad" opacity="0.95"/>
<rect x="181.75" y="288.7" width="0.7" height="76.50" fill="#d9c9ad" opacity="0.95"/>
<rect x="208.70" y="288.7" width="0.7" height="76.50" fill="#e9c9c4" opacity="0.95"/>
<rect x="235.64" y="288.7" width="0.7" height="76.50" fill="#d9c9ad" opacity="0.95"/>
<rect x="262.58" y="288.7" width="0.7" height="76.50" fill="#d9c9ad" opacity="0.95"/>
<rect x="289.53" y="288.7" width="0.7" height="76.50" fill="#d9c9ad" opacity="0.95"/>
<rect x="316.47" y="288.7" width="0.7" height="76.50" fill="#d9c9ad" opacity="0.95"/>
<rect x="343.41" y="288.7" width="0.7" height="76.50" fill="#d9c9ad" opacity="0.95"/>
<rect x="370.36" y="288.7" width="0.7" height="76.50" fill="#d9c9ad" opacity="0.95"/>
<rect x="397.30" y="288.7" width="0.7" height="76.50" fill="#d9c9ad" opacity="0.95"/>
<rect x="424.24" y="288.7" width="0.7" height="76.50" fill="#d9c9ad" opacity="0.95"/>
<rect x="451.19" y="288.7" width="0.7" height="76.50" fill="#d9c9ad" opacity="0.95"/>
<rect x="478.13" y="288.7" width="0.7" height="76.50" fill="#d9c9ad" opacity="0.95"/>
<rect x="505.07" y="288.7" width="0.7" height="76.50" fill="#d9c9ad" opacity="0.95"/>
<rect x="532.02" y="288.7" width="0.7" height="76.50" fill="#d9c9ad" opacity="0.95"/>
<rect x="558.96" y="288.7" width="0.7" height="76.50" fill="#d9c9ad" opacity="0.95"/>
<rect x="585.90" y="288.7" width="0.7" height="76.50" fill="#d9c9ad" opacity="0.95"/>
<rect x="612.85" y="288.7" width="0.7" height="76.50" fill="#d9c9ad" opacity="0.95"/>
<rect x="639.79" y="288.7" width="0.7" height="76.50" fill="#d9c9ad" opacity="0.95"/>
<rect x="666.73" y="288.7" width="0.7" height="76.50" fill="#d9c9ad" opacity="0.95"/>
<rect x="693.68" y="288.7" width="0.7" height="76.50" fill="#7fb6c0" opacity="0.95"/>
<rect x="47.5" y="364.9" width="655.5" height="0.6" fill="#cfd3da" opacity="0.7"/>
<rect x="47.1" y="288.7" width="0.8" height="76.5" fill="#e6cfc9" opacity="0.9"/>
<path d="M47.50 352.42 L47.99 351.95 L48.49 352.40 L48.98 338.82 L49.48 316.90 L49.97 338.82 L50.46 351.59 L50.96 343.09 L51.45 328.11 L51.95 343.09 L52.44 332.43 L52.93 344.72 L53.43 346.69 L53.92 337.60 L54.42 346.69 L54.91 351.96 L55.40 348.33 L55.90 341.91 L56.39 348.33 L56.89 352.55 L57.38 352.08 L57.87 349.64 L58.37 345.36 L58.86 349.64 L59.36 352.08 L59.85 352.02 L60.34 352.66 L60.84 351.23 L61.33 351.93 L61.82 351.54 L62.32 352.64 L62.81 352.71 L63.31 352.47 L63.80 352.33 L64.29 351.88 L64.79 352.11 L65.28 352.53 L65.78 352.84 L66.27 352.58 L66.76 351.53 L67.26 352.75 L67.75 352.11 L68.25 352.00 L68.74 349.97 L69.23 346.22 L69.73 349.97 L70.22 353.48 L70.72 352.46 L71.21 352.33 L71.70 352.76 L72.20 351.96 L72.69 352.30 L73.19 353.15 L73.68 351.76 L74.17 351.86" fill="none" stroke="#f2a9a2" stroke-width="1.2" stroke-linejoin="round"/>
<path d="M74.33 351.69 L74.83 339.15 L75.32 317.76 L75.81 339.15 L76.31 342.76 L76.80 327.25 L77.29 342.76 L77.79 352.54 L78.28 353.03 L78.78 352.85 L79.27 348.33 L79.76 341.91 L80.26 348.33 L80.75 353.14 L81.25 352.12 L81.74 346.69 L82.23 337.60 L82.73 346.69 L83.22 353.78 L83.72 352.05 L84.21 348.99 L84.70 343.64 L85.20 348.99 L85.69 351.60 L86.19 352.17 L86.68 352.11 L87.17 350.62 L87.67 347.95 L88.16 350.62 L88.66 351.95 L89.15 351.93 L89.64 353.21 L90.14 351.49 L90.63 351.69 L91.13 351.94 L91.62 353.45 L92.11 352.65 L92.61 351.75 L93.10 353.36 L93.60 352.37 L94.09 351.65 L94.58 353.05 L95.08 351.29 L95.57 351.93 L96.07 352.35 L96.56 352.07 L97.05 351.87 L97.55 352.19 L98.04 351.57 L98.54 352.66 L99.03 352.51 L99.52 351.63 L100.02 352.25 L100.51 352.79 L101.00 351.69" fill="none" stroke="#f2a9a2" stroke-width="1.2" stroke-linejoin="round"/>
<path d="M101.27 351.38 L101.77 352.53 L102.26 341.77 L102.76 324.66 L103.25 341.77 L103.74 352.44 L104.24 344.07 L104.73 330.70 L105.23 344.07 L105.72 342.43 L106.21 326.39 L106.71 342.43 L107.20 351.58 L107.70 341.12 L108.19 322.94 L108.68 341.12 L109.18 352.17 L109.67 348.33 L110.17 341.91 L110.66 348.33 L111.15 351.92 L111.65 349.97 L112.14 346.22 L112.64 349.97 L113.13 351.05 L113.62 352.07 L114.12 352.52 L114.61 352.49 L115.11 352.27 L115.60 351.70 L116.09 352.47 L116.59 352.03 L117.08 351.15 L117.58 353.81 L118.07 352.94 L118.56 352.12 L119.06 352.02 L119.55 352.12 L120.04 352.52 L120.54 351.87 L121.03 352.09 L121.53 352.58 L122.02 350.80 L122.51 352.05 L123.01 352.60 L123.50 352.32 L124.00 352.40 L124.49 352.30 L124.98 353.91 L125.48 352.56 L125.97 351.65 L126.47 352.97 L126.96 352.30 L127.45 351.69 L127.95 351.75" fill="none" stroke="#f2a9a2" stroke-width="1.2" stroke-linejoin="round"/>
<path d="M128.22 351.36 L128.71 353.29 L129.21 352.48 L129.70 352.47 L130.19 351.89 L130.69 351.60 L131.18 353.88 L131.68 351.61 L132.17 353.14 L132.66 351.85 L133.16 353.16 L133.65 352.16 L134.15 351.54 L134.64 352.35 L135.13 352.15 L135.63 351.78 L136.12 352.18 L136.62 352.32 L137.11 351.34 L137.60 351.63 L138.10 352.44 L138.59 350.61 L139.08 352.95 L139.58 351.71 L140.07 352.42 L140.57 352.18 L141.06 351.84 L141.55 352.13 L142.05 351.88 L142.54 353.18 L143.04 353.17 L143.53 351.89 L144.02 352.84 L144.52 352.88 L145.01 353.15 L145.51 351.50 L146.00 351.81 L146.49 351.37 L146.99 352.83 L147.48 352.26 L147.98 352.95 L148.47 351.80 L148.96 351.30 L149.46 352.80 L149.95 351.32 L150.45 351.67 L150.94 352.37 L151.43 353.45 L151.93 351.41 L152.42 352.32 L152.92 352.63 L153.41 352.02 L153.90 352.01 L154.40 351.36 L154.89 352.88" fill="none" stroke="#dfeaf5" stroke-width="1.2" stroke-linejoin="round"/>
<path d="M155.16 352.44 L155.66 352.25 L156.15 320.25 L156.64 320.58 L157.14 329.98 L157.63 328.91 L158.12 329.67 L158.62 328.49 L159.11 328.01 L159.61 328.11 L160.10 327.69 L160.59 328.23 L161.09 329.67 L161.58 328.33 L162.08 329.26 L162.57 329.49 L163.06 329.55 L163.56 329.93 L164.05 329.52 L164.55 331.30 L165.04 329.87 L165.53 331.17 L166.03 330.30 L166.52 330.32 L167.02 331.65 L167.51 331.19 L168.00 331.00 L168.50 330.95 L168.99 330.28 L169.49 329.70 L169.98 329.48 L170.47 330.80 L170.97 329.43 L171.46 329.66 L171.96 329.23 L172.45 328.31 L172.94 328.58 L173.44 328.38 L173.93 330.36 L174.43 328.17 L174.92 329.58 L175.41 330.69 L175.91 328.05 L176.40 329.50 L176.90 330.30 L177.39 329.81 L177.88 330.68 L178.38 330.19 L178.87 330.98 L179.37 331.12 L179.86 330.77 L180.35 332.28 L180.85 331.71 L181.34 335.05 L181.83 352.75" fill="none" stroke="#f1e1c4" stroke-width="1.2" stroke-linejoin="round"/>
<path d="M182.10 351.25 L182.60 352.00 L183.09 352.30 L183.59 351.95 L184.08 353.44 L184.57 351.64 L185.07 352.07 L185.56 352.69 L186.06 351.46 L186.55 351.17 L187.04 347.09 L187.54 347.09 L188.03 347.09 L188.53 352.15 L189.02 352.50 L189.51 344.50 L190.01 344.50 L190.50 351.64 L191.00 352.98 L191.49 346.22 L191.98 346.22 L192.48 346.22 L192.97 351.16 L193.47 351.77 L193.96 347.95 L194.45 347.95 L194.95 353.57 L195.44 352.71 L195.94 352.30 L196.43 348.81 L196.92 348.81 L197.42 348.81 L197.91 351.99 L198.41 352.04 L198.90 351.88 L199.39 352.14 L199.89 352.46 L200.38 351.79 L200.87 352.23 L201.37 352.76 L201.86 352.64 L202.36 352.26 L202.85 352.33 L203.34 352.17 L203.84 352.26 L204.33 352.16 L204.83 352.34 L205.32 353.02 L205.81 352.01 L206.31 351.63 L206.80 352.00 L207.30 352.38 L207.79 351.99 L208.28 352.85 L208.78 353.41" fill="none" stroke="#f2a9a2" stroke-width="1.2" stroke-linejoin="round"/>
<path d="M209.05 352.23 L209.54 352.82 L210.04 345.36 L210.53 345.36 L211.02 353.85 L211.52 352.89 L212.01 351.31 L212.51 352.49 L213.00 353.09 L213.49 352.72 L213.99 351.95 L214.48 351.96 L214.98 352.16 L215.47 351.37 L215.96 351.84 L216.46 352.28 L216.95 351.90 L217.45 351.26 L217.94 351.68 L218.43 351.64 L218.93 352.92 L219.42 352.35 L219.91 351.82 L220.41 352.44 L220.90 351.62 L221.40 351.90 L221.89 351.71 L222.38 352.39 L222.88 350.73 L223.37 351.51 L223.87 352.39 L224.36 352.21 L224.85 350.70 L225.35 352.47 L225.84 351.73 L226.34 351.67 L226.83 352.26 L227.32 352.97 L227.82 352.15 L228.31 352.05 L228.81 351.58 L229.30 351.79 L229.79 352.25 L230.29 351.75 L230.78 351.94 L231.28 352.14 L231.77 352.23 L232.26 352.41 L232.76 351.85 L233.25 352.90 L233.75 352.64 L234.24 352.26 L234.73 353.15 L235.23 352.53 L235.72 353.48" fill="none" stroke="#dfeaf5" stroke-width="1.2" stroke-linejoin="round"/>
<path d="M235.99 353.54 L236.49 352.78 L236.98 321.36 L237.47 323.70 L237.97 333.66 L238.46 332.00 L238.95 332.92 L239.45 334.31 L239.94 334.00 L240.44 334.35 L240.93 333.28 L241.42 332.97 L241.92 332.60 L242.41 333.64 L242.91 333.87 L243.40 332.92 L243.89 333.79 L244.39 332.46 L244.88 332.41 L245.38 332.48 L245.87 331.51 L246.36 332.05 L246.86 333.34 L247.35 331.37 L247.85 331.26 L248.34 332.40 L248.83 331.78 L249.33 331.30 L249.82 332.52 L250.32 332.21 L250.81 332.21 L251.30 333.59 L251.80 333.40 L252.29 333.18 L252.79 333.20 L253.28 333.67 L253.77 333.67 L254.27 333.37 L254.76 335.04 L255.26 333.11 L255.75 331.51 L256.24 332.03 L256.74 332.03 L257.23 332.54 L257.73 332.93 L258.22 332.65 L258.71 330.28 L259.21 331.56 L259.70 331.44 L260.20 331.22 L260.69 330.91 L261.18 331.19 L261.68 333.45 L262.17 334.88 L262.67 352.27" fill="none" stroke="#f1e1c4" stroke-width="1.2" stroke-linejoin="round"/>
<path d="M262.93 352.72 L263.43 353.54 L263.92 338.62 L264.42 337.76 L264.91 343.28 L265.40 342.60 L265.90 343.69 L266.39 344.26 L266.89 342.94 L267.38 344.89 L267.87 345.00 L268.37 343.99 L268.86 343.66 L269.36 343.94 L269.85 343.94 L270.34 342.50 L270.84 342.67 L271.33 342.24 L271.83 341.15 L272.32 342.26 L272.81 342.67 L273.31 342.49 L273.80 342.01 L274.30 341.08 L274.79 342.73 L275.28 344.26 L275.78 343.11 L276.27 343.19 L276.77 343.45 L277.26 343.37 L277.75 344.68 L278.25 344.89 L278.74 343.80 L279.24 343.79 L279.73 343.95 L280.22 344.12 L280.72 343.90 L281.21 344.03 L281.70 342.92 L282.20 342.74 L282.69 343.32 L283.19 342.81 L283.68 342.28 L284.17 342.82 L284.67 342.24 L285.16 341.18 L285.66 343.39 L286.15 342.34 L286.64 342.12 L287.14 342.69 L287.63 343.15 L288.13 344.87 L288.62 344.90 L289.11 346.03 L289.61 352.98" fill="none" stroke="#f1e1c4" stroke-width="1.2" stroke-linejoin="round"/>
<path d="M289.88 353.44 L290.37 352.81 L290.87 342.96 L291.36 343.38 L291.85 349.01 L292.35 349.27 L292.84 348.31 L293.34 349.07 L293.83 349.11 L294.32 347.82 L294.82 348.35 L295.31 347.72 L295.81 347.65 L296.30 347.25 L296.79 348.76 L297.29 347.17 L297.78 346.75 L298.28 347.85 L298.77 348.64 L299.26 347.75 L299.76 348.06 L300.25 348.64 L300.74 347.28 L301.24 347.05 L301.73 348.90 L302.23 348.40 L302.72 350.71 L303.21 348.82 L303.71 347.60 L304.20 349.23 L304.70 349.07 L305.19 350.06 L305.68 351.40 L306.18 349.07 L306.67 347.09 L307.17 348.50 L307.66 348.66 L308.15 347.41 L308.65 347.61 L309.14 346.87 L309.64 347.49 L310.13 347.45 L310.62 346.36 L311.12 348.10 L311.61 347.33 L312.11 346.63 L312.60 347.34 L313.09 348.30 L313.59 347.77 L314.08 348.89 L314.58 348.86 L315.07 350.32 L315.56 352.28 L316.06 351.75 L316.55 352.32" fill="none" stroke="#f1e1c4" stroke-width="1.2" stroke-linejoin="round"/>
<path d="M316.82 353.20 L317.32 353.32 L317.81 321.02 L318.30 322.14 L318.80 330.95 L319.29 331.94 L319.78 330.89 L320.28 330.67 L320.77 331.01 L321.27 331.74 L321.76 331.63 L322.25 330.91 L322.75 329.96 L323.24 330.90 L323.74 329.67 L324.23 330.69 L324.72 330.97 L325.22 329.68 L325.71 333.02 L326.21 331.60 L326.70 331.66 L327.19 333.04 L327.69 331.75 L328.18 333.27 L328.68 333.93 L329.17 332.88 L329.66 332.98 L330.16 332.63 L330.65 332.64 L331.15 331.45 L331.64 330.55 L332.13 331.76 L332.63 329.92 L333.12 331.03 L333.62 331.75 L334.11 330.68 L334.60 330.36 L335.10 331.82 L335.59 330.41 L336.09 330.33 L336.58 330.92 L337.07 331.23 L337.57 331.73 L338.06 330.21 L338.56 331.77 L339.05 332.45 L339.54 331.48 L340.04 331.96 L340.53 331.53 L341.03 332.94 L341.52 332.55 L342.01 333.92 L342.51 333.96 L343.00 336.04 L343.50 352.87" fill="none" stroke="#f1e1c4" stroke-width="1.2" stroke-linejoin="round"/>
<path d="M343.76 353.73 L344.26 353.29 L344.75 316.20 L345.25 313.61 L345.74 323.50 L346.23 323.62 L346.73 325.84 L347.22 323.71 L347.72 324.55 L348.21 324.12 L348.70 323.72 L349.20 323.70 L349.69 324.62 L350.19 324.88 L350.68 326.38 L351.17 324.94 L351.67 325.08 L352.16 325.42 L352.66 326.22 L353.15 325.59 L353.64 327.82 L354.14 325.76 L354.63 326.67 L355.13 325.85 L355.62 325.99 L356.11 326.01 L356.61 325.59 L357.10 325.45 L357.60 323.97 L358.09 324.89 L358.58 323.64 L359.08 324.25 L359.57 323.73 L360.07 325.51 L360.56 323.86 L361.05 324.37 L361.55 324.61 L362.04 325.02 L362.53 325.15 L363.03 324.53 L363.52 324.76 L364.02 325.22 L364.51 325.54 L365.00 325.84 L365.50 327.21 L365.99 325.99 L366.49 326.07 L366.98 325.57 L367.47 325.60 L367.97 325.88 L368.46 325.89 L368.96 327.59 L369.45 327.13 L369.94 327.83 L370.44 352.81" fill="none" stroke="#f1e1c4" stroke-width="1.2" stroke-linejoin="round"/>
<path d="M370.71 351.87 L371.20 353.25 L371.70 324.66 L372.19 322.77 L372.68 332.54 L373.18 330.83 L373.67 331.64 L374.17 331.76 L374.66 332.00 L375.15 331.92 L375.65 331.62 L376.14 332.41 L376.64 332.50 L377.13 331.41 L377.62 334.25 L378.12 331.95 L378.61 332.47 L379.11 333.48 L379.60 333.53 L380.09 333.44 L380.59 331.23 L381.08 332.84 L381.57 332.61 L382.07 331.89 L382.56 330.70 L383.06 331.23 L383.55 331.42 L384.04 331.54 L384.54 332.51 L385.03 331.48 L385.53 330.96 L386.02 331.01 L386.51 331.73 L387.01 331.55 L387.50 331.29 L388.00 332.02 L388.49 332.14 L388.98 331.99 L389.48 331.71 L389.97 333.04 L390.47 333.48 L390.96 331.79 L391.45 332.64 L391.95 332.43 L392.44 333.76 L392.94 332.43 L393.43 332.48 L393.92 332.57 L394.42 332.67 L394.91 332.26 L395.41 330.10 L395.90 332.09 L396.39 332.81 L396.89 333.48 L397.38 352.36" fill="none" stroke="#f1e1c4" stroke-width="1.2" stroke-linejoin="round"/>
<path d="M397.65 352.81 L398.15 352.87 L398.64 315.83 L399.13 315.36 L399.63 324.78 L400.12 326.53 L400.61 325.65 L401.11 326.72 L401.60 326.92 L402.10 326.02 L402.59 326.27 L403.08 325.56 L403.58 327.81 L404.07 327.04 L404.57 326.66 L405.06 327.07 L405.55 325.08 L406.05 325.94 L406.54 325.67 L407.04 324.83 L407.53 326.76 L408.02 325.50 L408.52 325.13 L409.01 323.08 L409.51 325.28 L410.00 326.14 L410.49 324.29 L410.99 325.93 L411.48 324.37 L411.98 325.25 L412.47 324.29 L412.96 324.76 L413.46 325.59 L413.95 324.97 L414.45 325.85 L414.94 326.31 L415.43 327.39 L415.93 327.61 L416.42 326.19 L416.92 325.55 L417.41 327.72 L417.90 325.69 L418.40 326.90 L418.89 325.53 L419.39 325.46 L419.88 326.36 L420.37 326.05 L420.87 325.30 L421.36 324.52 L421.86 325.04 L422.35 323.85 L422.84 325.37 L423.34 325.37 L423.83 327.04 L424.33 352.43" fill="none" stroke="#f1e1c4" stroke-width="1.2" stroke-linejoin="round"/>
<path d="M424.59 351.76 L425.09 352.94 L425.58 351.65 L426.08 352.14 L426.57 353.22 L427.06 351.86 L427.56 352.80 L428.05 351.49 L428.55 352.67 L429.04 352.36 L429.53 352.09 L430.03 352.46 L430.52 352.11 L431.02 352.60 L431.51 351.86 L432.00 352.26 L432.50 352.14 L432.99 353.92 L433.49 351.56 L433.98 352.24 L434.47 353.34 L434.97 352.20 L435.46 351.98 L435.96 351.62 L436.45 352.92 L436.94 351.33 L437.44 352.36 L437.93 350.82 L438.43 352.35 L438.92 351.85 L439.41 352.48 L439.91 352.94 L440.40 351.60 L440.90 351.72 L441.39 351.33 L441.88 351.75 L442.38 352.61 L442.87 353.27 L443.37 352.66 L443.86 352.67 L444.35 352.75 L444.85 351.91 L445.34 352.06 L445.83 352.43 L446.33 352.16 L446.82 352.35 L447.32 352.13 L447.81 351.81 L448.30 351.68 L448.80 352.68 L449.29 353.17 L449.79 351.40 L450.28 352.19 L450.77 351.59 L451.27 353.25" fill="none" stroke="#dfeaf5" stroke-width="1.2" stroke-linejoin="round"/>
<path d="M451.54 353.32 L452.03 354.00 L452.53 340.54 L453.02 341.46 L453.51 347.98 L454.01 347.51 L454.50 347.56 L455.00 347.56 L455.49 347.95 L455.98 347.10 L456.48 347.07 L456.97 347.24 L457.47 346.81 L457.96 345.30 L458.45 344.81 L458.95 345.57 L459.44 344.84 L459.94 346.14 L460.43 345.80 L460.92 345.87 L461.42 346.55 L461.91 347.60 L462.40 347.13 L462.90 347.61 L463.39 346.75 L463.89 348.51 L464.38 347.17 L464.87 348.97 L465.37 348.50 L465.86 348.36 L466.36 347.95 L466.85 347.43 L467.34 348.41 L467.84 348.14 L468.33 346.97 L468.83 347.10 L469.32 347.43 L469.81 347.50 L470.31 347.11 L470.80 347.11 L471.30 345.82 L471.79 345.99 L472.28 347.92 L472.78 345.22 L473.27 345.49 L473.77 345.47 L474.26 345.69 L474.75 347.68 L475.25 347.84 L475.74 346.71 L476.24 348.77 L476.73 348.27 L477.22 350.60 L477.72 349.37 L478.21 351.91" fill="none" stroke="#f1e1c4" stroke-width="1.2" stroke-linejoin="round"/>
<path d="M478.48 352.10 L478.98 352.36 L479.47 351.66 L479.96 351.64 L480.46 352.21 L480.95 353.08 L481.44 351.82 L481.94 352.55 L482.43 351.88 L482.93 352.10 L483.42 351.28 L483.91 351.58 L484.41 352.53 L484.90 352.05 L485.40 351.20 L485.89 352.59 L486.38 352.00 L486.88 351.54 L487.37 351.50 L487.87 351.95 L488.36 353.06 L488.85 353.02 L489.35 352.11 L489.84 352.03 L490.34 350.72 L490.83 352.78 L491.32 351.58 L491.82 351.80 L492.31 353.27 L492.81 352.76 L493.30 352.16 L493.79 352.56 L494.29 352.36 L494.78 351.98 L495.28 352.75 L495.77 351.98 L496.26 352.65 L496.76 352.59 L497.25 351.94 L497.75 352.61 L498.24 352.09 L498.73 351.30 L499.23 352.25 L499.72 352.35 L500.22 351.82 L500.71 352.48 L501.20 351.61 L501.70 353.04 L502.19 351.89 L502.69 352.57 L503.18 352.74 L503.67 351.19 L504.17 352.78 L504.66 351.20 L505.16 351.87" fill="none" stroke="#dfeaf5" stroke-width="1.2" stroke-linejoin="round"/>
<path d="M505.42 352.25 L505.92 352.40 L506.41 343.24 L506.91 345.91 L507.40 349.77 L507.89 348.61 L508.39 349.32 L508.88 350.24 L509.38 348.24 L509.87 350.28 L510.36 350.87 L510.86 351.01 L511.35 348.91 L511.85 350.34 L512.34 349.83 L512.83 350.80 L513.33 350.48 L513.82 351.07 L514.32 351.20 L514.81 351.39 L515.30 351.87 L515.80 351.11 L516.29 351.38 L516.79 352.61 L517.28 350.83 L517.77 351.23 L518.27 351.69 L518.76 350.54 L519.26 351.91 L519.75 348.51 L520.24 350.04 L520.74 349.90 L521.23 350.59 L521.73 348.38 L522.22 348.92 L522.71 349.71 L523.21 348.89 L523.70 349.32 L524.20 350.42 L524.69 350.75 L525.18 350.38 L525.68 350.70 L526.17 351.88 L526.66 350.57 L527.16 350.41 L527.65 352.34 L528.15 351.26 L528.64 351.69 L529.13 351.37 L529.63 351.45 L530.12 351.53 L530.62 352.84 L531.11 351.56 L531.60 352.89 L532.10 353.39" fill="none" stroke="#f1e1c4" stroke-width="1.2" stroke-linejoin="round"/>
<path d="M532.37 353.30 L532.86 353.46 L533.36 315.94 L533.85 317.93 L534.34 325.04 L534.84 325.60 L535.33 324.80 L535.83 324.05 L536.32 324.26 L536.81 326.39 L537.31 325.08 L537.80 325.55 L538.30 326.72 L538.79 326.47 L539.28 326.23 L539.78 327.32 L540.27 326.62 L540.77 326.39 L541.26 326.91 L541.75 326.35 L542.25 326.28 L542.74 324.88 L543.23 325.17 L543.73 325.57 L544.22 325.92 L544.72 325.61 L545.21 324.58 L545.70 326.08 L546.20 324.90 L546.69 325.31 L547.19 324.10 L547.68 322.74 L548.17 324.71 L548.67 324.65 L549.16 325.19 L549.66 324.12 L550.15 324.21 L550.64 325.62 L551.14 325.22 L551.63 325.72 L552.13 325.32 L552.62 325.69 L553.11 327.05 L553.61 325.76 L554.10 326.94 L554.60 326.68 L555.09 325.61 L555.58 327.35 L556.08 325.08 L556.57 325.84 L557.07 325.76 L557.56 325.48 L558.05 326.10 L558.55 328.47 L559.04 352.95" fill="none" stroke="#f1e1c4" stroke-width="1.2" stroke-linejoin="round"/>
<path d="M559.31 351.79 L559.81 352.26 L560.30 341.05 L560.79 341.05 L561.29 344.10 L561.78 345.08 L562.27 346.58 L562.77 345.11 L563.26 347.30 L563.76 347.10 L564.25 348.89 L564.74 347.21 L565.24 347.40 L565.73 349.39 L566.23 349.01 L566.72 348.39 L567.21 347.91 L567.71 346.43 L568.20 347.43 L568.70 348.88 L569.19 345.82 L569.68 347.56 L570.18 345.78 L570.67 345.22 L571.17 346.59 L571.66 346.83 L572.15 345.95 L572.65 345.53 L573.14 345.79 L573.64 347.15 L574.13 348.39 L574.62 348.21 L575.12 345.43 L575.61 347.64 L576.11 349.02 L576.60 348.01 L577.09 346.38 L577.59 346.52 L578.08 347.13 L578.58 346.52 L579.07 346.06 L579.56 347.82 L580.06 348.07 L580.55 345.50 L581.05 346.67 L581.54 344.36 L582.03 346.49 L582.53 348.34 L583.02 347.72 L583.52 348.19 L584.01 341.91 L584.50 341.91 L585.00 352.10 L585.49 352.28 L585.99 351.70" fill="none" stroke="#dfeaf5" stroke-width="1.2" stroke-linejoin="round"/>
<path d="M586.25 352.05 L586.75 353.03 L587.24 319.28 L587.74 317.60 L588.23 329.30 L588.72 328.40 L589.22 328.69 L589.71 327.81 L590.21 327.91 L590.70 328.23 L591.19 327.86 L591.69 328.24 L592.18 328.43 L592.68 327.44 L593.17 325.99 L593.66 328.40 L594.16 326.49 L594.65 325.92 L595.15 327.43 L595.64 326.25 L596.13 327.01 L596.63 326.51 L597.12 325.98 L597.62 327.11 L598.11 325.26 L598.60 325.81 L599.10 326.25 L599.59 327.46 L600.09 326.49 L600.58 326.08 L601.07 326.41 L601.57 327.37 L602.06 328.48 L602.56 328.11 L603.05 327.81 L603.54 326.69 L604.04 328.26 L604.53 327.81 L605.03 328.13 L605.52 328.35 L606.01 327.57 L606.51 327.90 L607.00 327.03 L607.49 327.56 L607.99 325.93 L608.48 326.69 L608.98 326.47 L609.47 325.16 L609.96 326.66 L610.46 326.12 L610.95 326.87 L611.45 327.01 L611.94 329.32 L612.43 330.64 L612.93 353.06" fill="none" stroke="#f1e1c4" stroke-width="1.2" stroke-linejoin="round"/>
<path d="M613.20 353.19 L613.69 353.16 L614.19 310.35 L614.68 311.29 L615.17 322.22 L615.67 322.20 L616.16 320.56 L616.66 321.35 L617.15 320.83 L617.64 321.27 L618.14 320.79 L618.63 320.07 L619.13 321.83 L619.62 319.35 L620.11 319.34 L620.61 319.43 L621.10 320.06 L621.60 319.83 L622.09 319.78 L622.58 319.90 L623.08 319.62 L623.57 318.80 L624.06 320.21 L624.56 320.93 L625.05 320.64 L625.55 321.38 L626.04 321.54 L626.53 322.24 L627.03 321.52 L627.52 321.70 L628.02 321.46 L628.51 321.60 L629.00 322.51 L629.50 320.93 L629.99 321.90 L630.49 322.73 L630.98 320.59 L631.47 321.52 L631.97 319.56 L632.46 320.94 L632.96 319.49 L633.45 319.18 L633.94 321.26 L634.44 320.99 L634.93 319.48 L635.43 320.23 L635.92 319.19 L636.41 320.56 L636.91 320.33 L637.40 320.18 L637.90 320.71 L638.39 322.18 L638.88 323.52 L639.38 325.63 L639.87 353.01" fill="none" stroke="#f1e1c4" stroke-width="1.2" stroke-linejoin="round"/>
<path d="M640.14 353.42 L640.64 353.33 L641.13 314.36 L641.62 314.00 L642.12 324.23 L642.61 322.92 L643.10 322.99 L643.60 323.60 L644.09 322.36 L644.59 322.97 L645.08 322.43 L645.57 321.84 L646.07 321.90 L646.56 321.89 L647.06 323.14 L647.55 322.83 L648.04 321.48 L648.54 322.47 L649.03 323.39 L649.53 322.64 L650.02 322.55 L650.51 323.00 L651.01 323.80 L651.50 324.44 L652.00 324.50 L652.49 322.34 L652.98 323.26 L653.48 324.18 L653.97 324.87 L654.47 323.96 L654.96 323.64 L655.45 323.53 L655.95 323.90 L656.44 322.85 L656.94 322.29 L657.43 323.78 L657.92 323.43 L658.42 323.65 L658.91 323.18 L659.41 323.40 L659.90 322.53 L660.39 322.45 L660.89 323.43 L661.38 322.66 L661.88 323.21 L662.37 324.50 L662.86 323.80 L663.36 323.40 L663.85 324.42 L664.35 323.51 L664.84 323.82 L665.33 326.60 L665.83 326.29 L666.32 326.70 L666.82 352.64" fill="none" stroke="#f1e1c4" stroke-width="1.2" stroke-linejoin="round"/>
<path d="M667.08 352.49 L667.58 352.39 L668.07 351.79 L668.57 352.52 L669.06 351.62 L669.55 353.22 L670.05 351.87 L670.54 352.37 L671.04 353.45 L671.53 351.67 L672.02 352.07 L672.52 352.25 L673.01 352.91 L673.51 352.54 L674.00 351.35 L674.49 352.76 L674.99 354.36 L675.48 352.78 L675.98 352.99 L676.47 352.34 L676.96 352.50 L677.46 352.81 L677.95 352.77 L678.45 351.63 L678.94 353.13 L679.43 351.08 L679.93 352.59 L680.42 352.92 L680.92 351.79 L681.41 351.92 L681.90 352.89 L682.40 351.81 L682.89 353.37 L683.39 352.82 L683.88 351.58 L684.37 352.42 L684.87 353.05 L685.36 351.95 L685.86 351.71 L686.35 352.28 L686.84 353.35 L687.34 352.47 L687.83 352.01 L688.32 351.80 L688.82 351.14 L689.31 352.42 L689.81 352.55 L690.30 352.29 L690.79 351.53 L691.29 352.83 L691.78 351.47 L692.28 353.92 L692.77 351.78 L693.26 352.67 L693.76 351.99" fill="none" stroke="#a6e3f2" stroke-width="1.2" stroke-linejoin="round"/>
<path d="M694.03 351.85 L694.52 352.98 L695.02 352.31 L695.51 352.12 L696.00 351.91 L696.50 352.82 L696.99 352.86 L697.49 353.42 L697.98 350.73 L698.47 352.38 L698.97 352.40 L699.46 353.16 L699.96 351.70 L700.45 352.59 L700.94 351.40 L701.44 351.75 L701.93 352.25 L702.43 351.82 L702.92 352.93" fill="none" stroke="#dfeaf5" stroke-width="1.2" stroke-linejoin="round"/>
<text x="44" y="297.90" font-size="4.5" fill="#cdd1d8" text-anchor="end">&#8722;40</text>
<rect x="45.3" y="295.95" width="2.2" height="0.5" fill="#cfd3da"/>
<text x="44" y="315.15" font-size="4.5" fill="#cdd1d8" text-anchor="end">&#8722;60</text>
<rect x="45.3" y="313.20" width="2.2" height="0.5" fill="#cfd3da"/>
<text x="44" y="332.40" font-size="4.5" fill="#cdd1d8" text-anchor="end">&#8722;80</text>
<rect x="45.3" y="330.45" width="2.2" height="0.5" fill="#cfd3da"/>
<text x="44" y="349.65" font-size="4.5" fill="#cdd1d8" text-anchor="end">&#8722;100</text>
<rect x="45.3" y="347.70" width="2.2" height="0.5" fill="#cfd3da"/>
<text x="44" y="366.90" font-size="4.5" fill="#cdd1d8" text-anchor="end">&#8722;120</text>
<rect x="45.3" y="364.95" width="2.2" height="0.5" fill="#cfd3da"/>
<rect x="92.04" y="365.2" width="0.5" height="1.8" fill="#cfd3da"/>
<text x="92.29" y="373.2" font-size="4.5" fill="#cdd1d8" text-anchor="middle">480</text>
<rect x="181.85" y="365.2" width="0.5" height="1.8" fill="#cfd3da"/>
<text x="182.10" y="373.2" font-size="4.5" fill="#cdd1d8" text-anchor="middle">500</text>
<rect x="271.67" y="365.2" width="0.5" height="1.8" fill="#cfd3da"/>
<text x="271.92" y="373.2" font-size="4.5" fill="#cdd1d8" text-anchor="middle">520</text>
<rect x="361.48" y="365.2" width="0.5" height="1.8" fill="#cfd3da"/>
<text x="361.73" y="373.2" font-size="4.5" fill="#cdd1d8" text-anchor="middle">540</text>
<rect x="451.29" y="365.2" width="0.5" height="1.8" fill="#cfd3da"/>
<text x="451.54" y="373.2" font-size="4.5" fill="#cdd1d8" text-anchor="middle">560</text>
<rect x="541.10" y="365.2" width="0.5" height="1.8" fill="#cfd3da"/>
<text x="541.35" y="373.2" font-size="4.5" fill="#cdd1d8" text-anchor="middle">580</text>
<rect x="630.91" y="365.2" width="0.5" height="1.8" fill="#cfd3da"/>
<text x="631.16" y="373.2" font-size="4.5" fill="#cdd1d8" text-anchor="middle">600</text>
<rect x="47.80" y="376.8" width="26.23" height="7.4" fill="#8a342f" stroke="#e6dcd8" stroke-opacity="0.7" stroke-width="0.5"/>
<text x="60.92" y="382.5" font-size="4.3" fill="#eceef2" fill-opacity="0.78" text-anchor="middle">14</text>
<rect x="74.63" y="376.8" width="26.34" height="7.4" fill="#8a342f" stroke="#e6dcd8" stroke-opacity="0.7" stroke-width="0.5"/>
<text x="87.80" y="382.5" font-size="4.3" fill="#eceef2" fill-opacity="0.78" text-anchor="middle">15</text>
<rect x="101.57" y="376.8" width="26.34" height="7.4" fill="#8a342f" stroke="#e6dcd8" stroke-opacity="0.7" stroke-width="0.5"/>
<text x="114.75" y="382.5" font-size="4.3" fill="#eceef2" fill-opacity="0.78" text-anchor="middle">16</text>
<rect x="128.52" y="376.8" width="26.34" height="7.4" fill="#2a3040" stroke="#e6dcd8" stroke-opacity="0.7" stroke-width="0.5"/>
<text x="141.69" y="382.5" font-size="4.3" fill="#eceef2" fill-opacity="0.78" text-anchor="middle">17</text>
<rect x="155.46" y="376.8" width="26.34" height="7.4" fill="#8a7152" stroke="#e6dcd8" stroke-opacity="0.7" stroke-width="0.5"/>
<text x="168.63" y="382.5" font-size="4.3" fill="#eceef2" fill-opacity="0.78" text-anchor="middle">18</text>
<rect x="182.40" y="376.8" width="26.34" height="7.4" fill="#8a342f" stroke="#e6dcd8" stroke-opacity="0.7" stroke-width="0.5"/>
<text x="195.58" y="382.5" font-size="4.3" fill="#eceef2" fill-opacity="0.78" text-anchor="middle">19</text>
<rect x="209.35" y="376.8" width="26.34" height="7.4" fill="#2a3040" stroke="#e6dcd8" stroke-opacity="0.7" stroke-width="0.5"/>
<text x="222.52" y="382.5" font-size="4.3" fill="#eceef2" fill-opacity="0.78" text-anchor="middle">20</text>
<rect x="236.29" y="376.8" width="26.34" height="7.4" fill="#8a7152" stroke="#e6dcd8" stroke-opacity="0.7" stroke-width="0.5"/>
<text x="249.46" y="382.5" font-size="4.3" fill="#eceef2" fill-opacity="0.78" text-anchor="middle">21</text>
<rect x="263.23" y="376.8" width="26.34" height="7.4" fill="#8a7152" stroke="#e6dcd8" stroke-opacity="0.7" stroke-width="0.5"/>
<text x="276.41" y="382.5" font-size="4.3" fill="#eceef2" fill-opacity="0.78" text-anchor="middle">22</text>
<rect x="290.18" y="376.8" width="26.34" height="7.4" fill="#8a7152" stroke="#e6dcd8" stroke-opacity="0.7" stroke-width="0.5"/>
<text x="303.35" y="382.5" font-size="4.3" fill="#eceef2" fill-opacity="0.78" text-anchor="middle">23</text>
<rect x="317.12" y="376.8" width="26.34" height="7.4" fill="#8a7152" stroke="#e6dcd8" stroke-opacity="0.7" stroke-width="0.5"/>
<text x="330.29" y="382.5" font-size="4.3" fill="#eceef2" fill-opacity="0.78" text-anchor="middle">24</text>
<rect x="344.06" y="376.8" width="26.34" height="7.4" fill="#8a7152" stroke="#e6dcd8" stroke-opacity="0.7" stroke-width="0.5"/>
<text x="357.24" y="382.5" font-size="4.3" fill="#eceef2" fill-opacity="0.78" text-anchor="middle">25</text>
<rect x="371.01" y="376.8" width="26.34" height="7.4" fill="#8a7152" stroke="#e6dcd8" stroke-opacity="0.7" stroke-width="0.5"/>
<text x="384.18" y="382.5" font-size="4.3" fill="#eceef2" fill-opacity="0.78" text-anchor="middle">26</text>
<rect x="397.95" y="376.8" width="26.34" height="7.4" fill="#8a7152" stroke="#e6dcd8" stroke-opacity="0.7" stroke-width="0.5"/>
<text x="411.12" y="382.5" font-size="4.3" fill="#eceef2" fill-opacity="0.78" text-anchor="middle">27</text>
<rect x="424.89" y="376.8" width="26.34" height="7.4" fill="#2a3040" stroke="#e6dcd8" stroke-opacity="0.7" stroke-width="0.5"/>
<text x="438.07" y="382.5" font-size="4.3" fill="#eceef2" fill-opacity="0.78" text-anchor="middle">28</text>
<rect x="451.84" y="376.8" width="26.34" height="7.4" fill="#8a7152" stroke="#e6dcd8" stroke-opacity="0.7" stroke-width="0.5"/>
<text x="465.01" y="382.5" font-size="4.3" fill="#eceef2" fill-opacity="0.78" text-anchor="middle">29</text>
<rect x="478.78" y="376.8" width="26.34" height="7.4" fill="#2a3040" stroke="#e6dcd8" stroke-opacity="0.7" stroke-width="0.5"/>
<text x="491.95" y="382.5" font-size="4.3" fill="#eceef2" fill-opacity="0.78" text-anchor="middle">30</text>
<rect x="505.72" y="376.8" width="26.34" height="7.4" fill="#8a7152" stroke="#e6dcd8" stroke-opacity="0.7" stroke-width="0.5"/>
<text x="518.90" y="382.5" font-size="4.3" fill="#eceef2" fill-opacity="0.78" text-anchor="middle">31</text>
<rect x="532.67" y="376.8" width="26.34" height="7.4" fill="#8a7152" stroke="#e6dcd8" stroke-opacity="0.7" stroke-width="0.5"/>
<text x="545.84" y="382.5" font-size="4.3" fill="#eceef2" fill-opacity="0.78" text-anchor="middle">32</text>
<rect x="559.61" y="376.8" width="26.34" height="7.4" fill="#2a3040" stroke="#e6dcd8" stroke-opacity="0.7" stroke-width="0.5"/>
<text x="572.78" y="382.5" font-size="4.3" fill="#eceef2" fill-opacity="0.78" text-anchor="middle">33</text>
<rect x="586.55" y="376.8" width="26.34" height="7.4" fill="#8a7152" stroke="#e6dcd8" stroke-opacity="0.7" stroke-width="0.5"/>
<text x="599.73" y="382.5" font-size="4.3" fill="#eceef2" fill-opacity="0.78" text-anchor="middle">34</text>
<rect x="613.50" y="376.8" width="26.34" height="7.4" fill="#8a7152" stroke="#e6dcd8" stroke-opacity="0.7" stroke-width="0.5"/>
<text x="626.67" y="382.5" font-size="4.3" fill="#eceef2" fill-opacity="0.78" text-anchor="middle">35</text>
<rect x="640.44" y="376.8" width="26.34" height="7.4" fill="#8a7152" stroke="#e6dcd8" stroke-opacity="0.7" stroke-width="0.5"/>
<text x="653.61" y="382.5" font-size="4.3" fill="#eceef2" fill-opacity="0.78" text-anchor="middle">36</text>
<rect x="667.38" y="376.8" width="26.34" height="7.4" fill="#2a6c79" stroke="#e6dcd8" stroke-opacity="0.7" stroke-width="0.5"/>
<text x="680.56" y="382.5" font-size="4.3" fill="#eceef2" fill-opacity="0.78" text-anchor="middle">37</text>
<rect x="694.33" y="376.8" width="8.37" height="7.4" fill="#2a3040" stroke="#e6dcd8" stroke-opacity="0.7" stroke-width="0.5"/>
<rect x="47.5" y="399.5" width="183" height="0.7" fill="#3a6270"/>
<path d="M61.0 400.2 L61.0 397.59 L62.0 397.59 L62.0 398.20 L63.0 398.20 L63.0 397.70 L64.0 397.70 L64.0 398.15 L65.0 398.15 L65.0 397.40 L66.0 397.40 L66.0 398.20 L67.0 398.20 L67.0 398.04 L68.0 398.04 L68.0 396.82 L69.0 396.82 L69.0 398.20 L70.0 398.20 L70.0 396.09 L71.0 396.09 L71.0 398.20 L72.0 398.20 L72.0 398.20 L73.0 398.20 L73.0 398.20 L74.0 398.20 L74.0 398.20 L75.0 398.20 L75.0 398.20 L76.0 398.20 L76.0 398.10 L77.0 398.10 L77.0 397.79 L78.0 397.79 L78.0 396.69 L79.0 396.69 L79.0 397.37 L80.0 397.37 L80.0 397.31 L81.0 397.31 L81.0 398.07 L82.0 398.07 L82.0 398.20 L83.0 398.20 L83.0 398.20 L84.0 398.20 L84.0 398.20 L85.0 398.20 L85.0 398.20 L86.0 398.20 L86.0 398.11 L87.0 398.11 L87.0 398.19 L88.0 398.19 L88.0 398.20 L89.0 398.20 L89.0 396.67 L90.0 396.67 L90.0 396.20 L91.0 396.20 L91.0 398.20 L92.0 398.20 L92.0 398.13 L93.0 398.13 L93.0 398.20 L94.0 398.20 L94.0 396.09 L95.0 396.09 L95.0 398.19 L96.0 398.19 L96.0 398.20 L97.0 398.20 L97.0 398.20 L98.0 398.20 L98.0 398.19 L99.0 398.19 L99.0 396.17 L100.0 396.17 L100.0 398.20 L101.0 398.20 L101.0 398.10 L102.0 398.10 L102.0 398.20 L103.0 398.20 L103.0 398.20 L104.0 398.20 L104.0 397.59 L105.0 397.59 L105.0 398.14 L106.0 398.14 L106.0 398.20 L107.0 398.20 L107.0 397.37 L108.0 397.37 L108.0 397.87 L109.0 397.87 L109.0 398.08 L110.0 398.08 L110.0 398.20 L111.0 398.20 L111.0 398.20 L112.0 398.20 L112.0 396.52 L113.0 396.52 L113.0 397.92 L114.0 397.92 L114.0 398.20 L115.0 398.20 L115.0 398.20 L116.0 398.20 L116.0 396.05 L117.0 396.05 L117.0 398.09 L118.0 398.09 L118.0 398.20 L119.0 398.20 L119.0 398.05 L120.0 398.05 L120.0 398.19 L121.0 398.19 L121.0 398.10 L122.0 398.10 L122.0 398.20 L123.0 398.20 L123.0 397.81 L124.0 397.81 L124.0 398.20 L125.0 398.20 L125.0 397.55 L126.0 397.55 L126.0 398.20 L127.0 398.20 L127.0 398.16 L128.0 398.16 L128.0 398.20 L129.0 398.20 L129.0 398.20 L130.0 398.20 L130.0 398.14 L131.0 398.14 L131.0 398.20 L132.0 398.20 L132.0 398.20 L133.0 398.20 L133.0 396.23 L134.0 396.23 L134.0 398.20 L135.0 398.20 L135.0 398.20 L136.0 398.20 L136.0 398.18 L137.0 398.18 L137.0 396.18 L138.0 396.18 L138.0 397.18 L139.0 397.18 L139.0 396.76 L140.0 396.76 L140.0 398.05 L141.0 398.05 L141.0 397.13 L142.0 397.13 L142.0 398.11 L143.0 398.11 L143.0 396.65 L144.0 396.65 L144.0 398.20 L145.0 398.20 L145.0 396.38 L146.0 396.38 L146.0 398.20 L147.0 398.20 L147.0 397.83 L148.0 397.83 L148.0 398.15 L149.0 398.15 L149.0 397.56 L150.0 397.56 L150.0 397.96 L151.0 397.96 L151.0 398.20 L152.0 398.20 L152.0 398.20 L153.0 398.20 L153.0 398.20 L154.0 398.20 L154.0 398.20 L155.0 398.20 L155.0 398.17 L156.0 398.17 L156.0 398.20 L157.0 398.20 L157.0 398.20 L158.0 398.20 L158.0 398.20 L159.0 398.20 L159.0 398.20 L160.0 398.20 L160.0 397.39 L161.0 397.39 L161.0 397.10 L162.0 397.10 L162.0 396.00 L163.0 396.00 L163.0 397.62 L164.0 397.62 L164.0 398.20 L165.0 398.20 L165.0 398.20 L166.0 398.20 L166.0 398.20 L167.0 398.20 L167.0 398.20 L168.0 398.20 L168.0 398.20 L169.0 398.20 L169.0 398.20 L170.0 398.20 L170.0 397.24 L171.0 397.24 L171.0 398.20 L172.0 398.20 L172.0 398.20 L173.0 398.20 L173.0 396.89 L174.0 396.89 L174.0 398.20 L175.0 398.20 L175.0 397.42 L176.0 397.42 L176.0 397.53 L177.0 397.53 L177.0 398.20 L178.0 398.20 L178.0 397.38 L179.0 397.38 L179.0 398.20 L180.0 398.20 L180.0 398.20 L181.0 398.20 L181.0 398.20 L182.0 398.20 L182.0 397.08 L183.0 397.08 L183.0 397.84 L184.0 397.84 L184.0 398.20 L185.0 398.20 L185.0 397.03 L186.0 397.03 L186.0 397.48 L187.0 397.48 L187.0 398.11 L188.0 398.11 L188.0 398.20 L189.0 398.20 L189.0 397.45 L190.0 397.45 L190.0 398.20 L191.0 398.20 L191.0 398.20 L192.0 398.20 L192.0 397.26 L193.0 397.26 L193.0 398.16 L194.0 398.16 L194.0 398.20 L195.0 398.20 L195.0 398.20 L196.0 398.20 L196.0 396.49 L197.0 396.49 L197.0 397.30 L198.0 397.30 L198.0 397.85 L199.0 397.85 L199.0 398.20 L200.0 398.20 L200.0 400.2 Z" fill="#40697a"/>
<path d="M66.0 400.2 L66.0 399.30 L67.0 399.30 L67.0 399.30 L68.0 399.30 L68.0 398.69 L69.0 398.69 L69.0 399.28 L70.0 399.28 L70.0 397.95 L71.0 397.95 L71.0 399.30 L72.0 399.30 L72.0 399.30 L73.0 399.30 L73.0 399.30 L74.0 399.30 L74.0 399.26 L75.0 399.26 L75.0 399.18 L76.0 399.18 L76.0 399.01 L77.0 399.01 L77.0 399.30 L78.0 399.30 L78.0 399.14 L79.0 399.14 L79.0 399.30 L80.0 399.30 L80.0 399.30 L81.0 399.30 L81.0 399.29 L82.0 399.29 L82.0 397.82 L83.0 397.82 L83.0 398.36 L84.0 398.36 L84.0 399.30 L85.0 399.30 L85.0 398.10 L86.0 398.10 L86.0 399.28 L87.0 399.28 L87.0 399.30 L88.0 399.30 L88.0 399.30 L89.0 399.30 L89.0 399.27 L90.0 399.27 L90.0 398.58 L91.0 398.58 L91.0 398.58 L92.0 398.58 L92.0 399.30 L93.0 399.30 L93.0 399.30 L94.0 399.30 L94.0 399.30 L95.0 399.30 L95.0 399.30 L96.0 399.30 L96.0 398.91 L97.0 398.91 L97.0 399.30 L98.0 399.30 L98.0 398.35 L99.0 398.35 L99.0 399.19 L100.0 399.19 L100.0 398.40 L101.0 398.40 L101.0 399.30 L102.0 399.30 L102.0 399.30 L103.0 399.30 L103.0 399.30 L104.0 399.30 L104.0 398.10 L105.0 398.10 L105.0 399.30 L106.0 399.30 L106.0 397.58 L107.0 397.58 L107.0 399.30 L108.0 399.30 L108.0 398.95 L109.0 398.95 L109.0 399.30 L110.0 399.30 L110.0 399.30 L111.0 399.30 L111.0 398.72 L112.0 398.72 L112.0 399.30 L113.0 399.30 L113.0 399.30 L114.0 399.30 L114.0 399.30 L115.0 399.30 L115.0 398.52 L116.0 398.52 L116.0 398.32 L117.0 398.32 L117.0 399.30 L118.0 399.30 L118.0 399.30 L119.0 399.30 L119.0 399.30 L120.0 399.30 L120.0 397.71 L121.0 397.71 L121.0 399.30 L122.0 399.30 L122.0 399.30 L123.0 399.30 L123.0 399.30 L124.0 399.30 L124.0 399.30 L125.0 399.30 L125.0 397.67 L126.0 397.67 L126.0 399.30 L127.0 399.30 L127.0 399.29 L128.0 399.29 L128.0 398.76 L129.0 398.76 L129.0 399.30 L130.0 399.30 L130.0 399.30 L131.0 399.30 L131.0 399.30 L132.0 399.30 L132.0 398.08 L133.0 398.08 L133.0 399.12 L134.0 399.12 L134.0 399.30 L135.0 399.30 L135.0 399.27 L136.0 399.27 L136.0 399.30 L137.0 399.30 L137.0 399.30 L138.0 399.30 L138.0 399.30 L139.0 399.30 L139.0 399.30 L140.0 399.30 L140.0 399.30 L141.0 399.30 L141.0 397.52 L142.0 397.52 L142.0 399.23 L143.0 399.23 L143.0 399.30 L144.0 399.30 L144.0 398.30 L145.0 398.30 L145.0 399.30 L146.0 399.30 L146.0 399.30 L147.0 399.30 L147.0 399.30 L148.0 399.30 L148.0 399.30 L149.0 399.30 L149.0 399.06 L150.0 399.06 L150.0 399.30 L151.0 399.30 L151.0 399.30 L152.0 399.30 L152.0 397.90 L153.0 397.90 L153.0 399.30 L154.0 399.30 L154.0 399.30 L155.0 399.30 L155.0 399.30 L156.0 399.30 L156.0 398.79 L157.0 398.79 L157.0 399.30 L158.0 399.30 L158.0 399.30 L159.0 399.30 L159.0 397.43 L160.0 397.43 L160.0 399.30 L161.0 399.30 L161.0 398.07 L162.0 398.07 L162.0 399.30 L163.0 399.30 L163.0 398.41 L164.0 398.41 L164.0 398.79 L165.0 398.79 L165.0 397.48 L166.0 397.48 L166.0 399.30 L167.0 399.30 L167.0 398.91 L168.0 398.91 L168.0 398.98 L169.0 398.98 L169.0 399.30 L170.0 399.30 L170.0 399.30 L171.0 399.30 L171.0 399.14 L172.0 399.14 L172.0 398.61 L173.0 398.61 L173.0 399.30 L174.0 399.30 L174.0 398.14 L175.0 398.14 L175.0 399.25 L176.0 399.25 L176.0 398.42 L177.0 398.42 L177.0 399.09 L178.0 399.09 L178.0 399.30 L179.0 399.30 L179.0 398.30 L180.0 398.30 L180.0 398.84 L181.0 398.84 L181.0 399.24 L182.0 399.24 L182.0 399.30 L183.0 399.30 L183.0 399.07 L184.0 399.07 L184.0 398.81 L185.0 398.81 L185.0 399.24 L186.0 399.24 L186.0 399.30 L187.0 399.30 L187.0 399.30 L188.0 399.30 L188.0 399.30 L189.0 399.30 L189.0 399.30 L190.0 399.30 L190.0 399.30 L191.0 399.30 L191.0 399.30 L192.0 399.30 L192.0 398.27 L193.0 398.27 L193.0 399.30 L194.0 399.30 L194.0 399.30 L195.0 399.30 L195.0 399.14 L196.0 399.14 L196.0 399.30 L197.0 399.30 L197.0 397.31 L198.0 397.31 L198.0 399.30 L199.0 399.30 L199.0 399.21 L200.0 399.21 L200.0 400.2 Z" fill="#4f8292" opacity="0.8"/>
<path d="M88.0 400.2 L88.0 396.52 L89.0 396.52 L89.0 395.53 L90.0 395.53 L90.0 395.65 L91.0 395.65 L91.0 396.38 L92.0 396.38 L92.0 396.60 L93.0 396.60 L93.0 395.91 L94.0 395.91 L94.0 396.60 L95.0 396.60 L95.0 396.60 L96.0 396.60 L96.0 396.24 L97.0 396.24 L97.0 396.25 L98.0 396.25 L98.0 396.56 L99.0 396.56 L99.0 396.59 L100.0 396.59 L100.0 400.2 Z" fill="#4b7d8e"/>
<path d="M160.0 400.2 L160.0 396.41 L161.0 396.41 L161.0 396.36 L162.0 396.36 L162.0 396.95 L163.0 396.95 L163.0 395.50 L164.0 395.50 L164.0 397.00 L165.0 397.00 L165.0 397.00 L166.0 397.00 L166.0 397.00 L167.0 397.00 L167.0 397.00 L168.0 397.00 L168.0 395.78 L169.0 395.78 L169.0 396.59 L170.0 396.59 L170.0 396.66 L171.0 396.66 L171.0 397.00 L172.0 397.00 L172.0 400.2 Z" fill="#4b7d8e"/>
<path d="M200.0 400.2 L200.0 398.80 L201.0 398.80 L201.0 398.80 L202.0 398.80 L202.0 398.71 L203.0 398.71 L203.0 398.80 L204.0 398.80 L204.0 398.79 L205.0 398.79 L205.0 398.69 L206.0 398.69 L206.0 398.41 L207.0 398.41 L207.0 398.80 L208.0 398.80 L208.0 398.80 L209.0 398.80 L209.0 398.80 L210.0 398.80 L210.0 398.80 L211.0 398.80 L211.0 398.64 L212.0 398.64 L212.0 398.80 L213.0 398.80 L213.0 398.80 L214.0 398.80 L214.0 398.80 L215.0 398.80 L215.0 398.39 L216.0 398.39 L216.0 398.80 L217.0 398.80 L217.0 398.80 L218.0 398.80 L218.0 398.80 L219.0 398.80 L219.0 398.41 L220.0 398.41 L220.0 398.80 L221.0 398.80 L221.0 398.80 L222.0 398.80 L222.0 398.80 L223.0 398.80 L223.0 398.80 L224.0 398.80 L224.0 398.56 L225.0 398.56 L225.0 398.75 L226.0 398.75 L226.0 398.80 L227.0 398.80 L227.0 398.61 L228.0 398.61 L228.0 398.80 L229.0 398.80 L229.0 398.36 L230.0 398.36 L230.0 398.80 L231.0 398.80 L231.0 400.2 Z" fill="#335664"/>
<rect x="344.9" y="389" width="98.7" height="11.4" fill="#2b3242" stroke="#b4b9c3" stroke-width="0.7"/>
<path d="M347.0 400.2 L347.0 397.46 L348.3 397.46 L348.3 398.15 L349.6 398.15 L349.6 394.70 L350.9 394.70 L350.9 399.30 L352.2 399.30 L352.2 399.30 L353.5 399.30 L353.5 399.30 L354.8 399.30 L354.8 399.30 L356.1 399.30 L356.1 397.72 L357.4 397.72 L357.4 399.30 L358.7 399.30 L358.7 398.68 L360.0 398.68 L360.0 399.17 L361.3 399.17 L361.3 399.27 L362.6 399.27 L362.6 395.60 L363.9 395.60 L363.9 398.26 L365.2 398.26 L365.2 399.30 L366.5 399.30 L366.5 394.75 L367.8 394.75 L367.8 399.30 L369.1 399.30 L369.1 399.30 L370.4 399.30 L370.4 397.82 L371.7 397.82 L371.7 399.30 L373.0 399.30 L373.0 395.38 L374.3 395.38 L374.3 398.42 L375.6 398.42 L375.6 398.32 L376.9 398.32 L376.9 399.29 L378.2 399.29 L378.2 399.30 L379.5 399.30 L379.5 398.18 L380.8 398.18 L380.8 398.80 L382.1 398.80 L382.1 397.49 L383.4 397.49 L383.4 399.01 L384.7 399.01 L384.7 399.30 L386.0 399.30 L386.0 399.30 L387.3 399.30 L387.3 399.30 L388.6 399.30 L388.6 396.82 L389.9 396.82 L389.9 395.67 L391.2 395.67 L391.2 399.30 L392.5 399.30 L392.5 394.81 L393.8 394.81 L393.8 399.30 L395.1 399.30 L395.1 395.60 L396.4 395.60 L396.4 398.39 L397.7 398.39 L397.7 399.30 L399.0 399.30 L399.0 398.19 L400.3 398.19 L400.3 399.30 L401.6 399.30 L401.6 399.30 L402.9 399.30 L402.9 394.91 L404.2 394.91 L404.2 399.30 L405.5 399.30 L405.5 399.26 L406.8 399.26 L406.8 399.30 L408.1 399.30 L408.1 399.16 L409.4 399.16 L409.4 398.17 L410.7 398.17 L410.7 398.53 L412.0 398.53 L412.0 399.30 L413.3 399.30 L413.3 399.06 L414.6 399.06 L414.6 398.62 L415.9 398.62 L415.9 399.30 L417.2 399.30 L417.2 394.72 L418.5 394.72 L418.5 399.30 L419.8 399.30 L419.8 399.30 L421.1 399.30 L421.1 399.26 L422.4 399.26 L422.4 399.30 L423.7 399.30 L423.7 399.30 L425.0 399.30 L425.0 399.30 L426.3 399.30 L426.3 399.04 L427.6 399.04 L427.6 399.30 L428.9 399.30 L428.9 397.85 L430.2 397.85 L430.2 399.30 L431.5 399.30 L431.5 399.30 L432.8 399.30 L432.8 399.08 L434.1 399.08 L434.1 399.30 L435.4 399.30 L435.4 399.30 L436.7 399.30 L436.7 399.30 L438.0 399.30 L438.0 399.29 L439.3 399.29 L439.3 398.60 L440.6 398.60 L440.6 399.30 L441.9 399.30 L441.9 398.11 L443.2 398.11 L442.0 400.2 Z" fill="#8fa9b6"/>
<path d="M445.0 400.2 L445.0 398.99 L446.0 398.99 L446.0 398.41 L447.0 398.41 L447.0 398.75 L448.0 398.75 L448.0 398.93 L449.0 398.93 L449.0 397.85 L450.0 397.85 L450.0 399.00 L451.0 399.00 L451.0 398.98 L452.0 398.98 L452.0 399.00 L453.0 399.00 L453.0 397.77 L454.0 397.77 L454.0 398.67 L455.0 398.67 L455.0 397.62 L456.0 397.62 L456.0 398.14 L457.0 398.14 L457.0 399.00 L458.0 399.00 L458.0 400.2 Z" fill="#7fa0ad"/>
<rect x="231" y="399.59999999999997" width="113" height="0.6" fill="#28414d"/>
<rect x="458" y="399.4" width="42" height="0.8" fill="#4b7d8e"/>
<path d="M635.5 400.2 L635.5 398.60 L636.5 398.60 L636.5 399.00 L637.5 399.00 L637.5 399.00 L638.5 399.00 L638.5 399.00 L639.5 399.00 L639.5 398.99 L640.5 398.99 L640.5 399.00 L641.5 399.00 L641.5 398.99 L642.5 398.99 L642.5 399.00 L643.5 399.00 L643.5 399.00 L644.5 399.00 L644.5 399.00 L645.5 399.00 L645.5 398.14 L646.5 398.14 L646.5 398.95 L647.5 398.95 L647.5 399.00 L648.5 399.00 L648.5 398.89 L649.5 398.89 L649.5 399.00 L650.5 399.00 L650.5 399.00 L651.5 399.00 L651.5 398.98 L652.5 398.98 L652.5 398.26 L653.5 398.26 L653.5 398.99 L654.5 398.99 L654.5 399.00 L655.5 399.00 L655.5 399.00 L656.5 399.00 L656.5 399.00 L657.5 399.00 L657.5 399.00 L658.5 399.00 L658.5 399.00 L659.5 399.00 L659.5 399.00 L660.5 399.00 L660.5 399.00 L661.5 399.00 L661.5 398.88 L662.5 398.88 L662.5 397.71 L663.5 397.71 L663.5 399.00 L664.5 399.00 L664.5 398.84 L665.5 398.84 L665.5 398.84 L666.5 398.84 L666.5 398.81 L667.5 398.81 L667.5 398.57 L668.5 398.57 L668.5 399.00 L669.5 399.00 L669.5 399.00 L670.5 399.00 L670.5 399.00 L671.5 399.00 L671.5 399.00 L672.5 399.00 L672.5 398.18 L673.5 398.18 L673.5 399.00 L674.5 399.00 L674.5 399.00 L675.5 399.00 L675.5 399.00 L676.5 399.00 L676.5 399.00 L677.5 399.00 L677.5 399.00 L678.5 399.00 L678.5 399.00 L679.5 399.00 L679.5 399.00 L680.5 399.00 L680.5 399.00 L681.5 399.00 L681.5 398.60 L682.5 398.60 L682.5 399.00 L683.5 399.00 L683.5 398.99 L684.5 398.99 L684.5 399.00 L685.5 399.00 L685.5 399.00 L686.5 399.00 L686.5 398.45 L687.5 398.45 L687.5 398.21 L688.5 398.21 L688.5 399.00 L689.5 399.00 L689.5 398.95 L690.5 398.95 L690.5 399.00 L691.5 399.00 L691.5 399.00 L692.5 399.00 L692.5 399.00 L693.5 399.00 L693.5 398.86 L694.5 398.86 L694.5 399.00 L695.5 399.00 L695.5 399.00 L696.5 399.00 L696.5 399.00 L697.5 399.00 L697.5 399.00 L698.5 399.00 L698.5 399.00 L699.5 399.00 L699.5 399.00 L700.5 399.00 L700.5 399.00 L701.5 399.00 L701.5 399.00 L702.5 399.00 L702.5 399.00 L703.5 399.00 L703.0 400.2 Z" fill="#5f919f"/>
</svg>
<div style="position:absolute;left:0.00px;top:441.00px;width:736.00px;height:1.00px;background:#bdbdbd"></div>
</div>
</body></html>
